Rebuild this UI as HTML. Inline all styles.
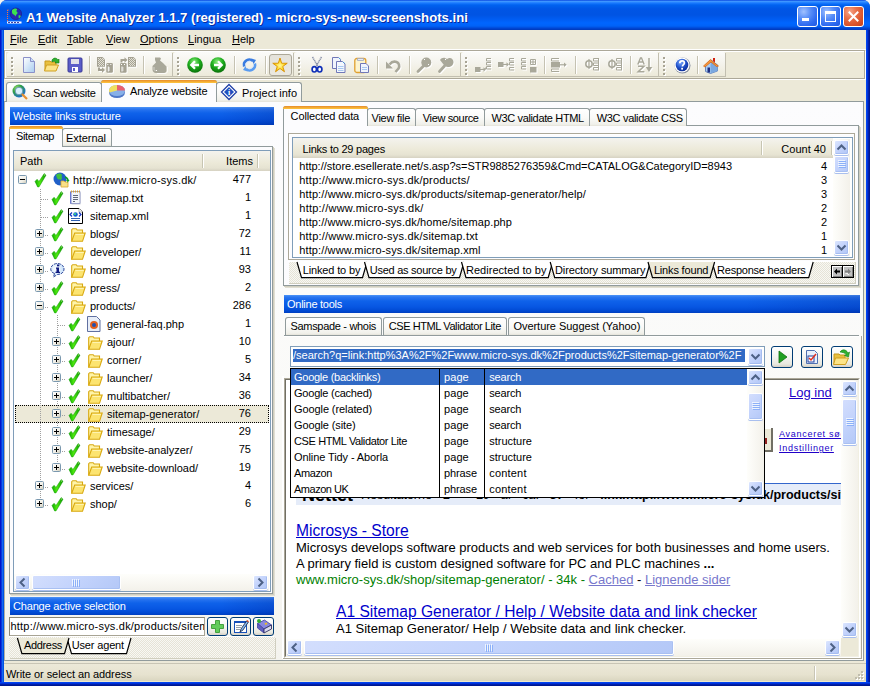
<!DOCTYPE html><html><head><meta charset="utf-8"><style>
*{box-sizing:border-box;margin:0;padding:0}
html,body{width:870px;height:686px;overflow:hidden}
body{position:relative;background:#F4F4F2;font-family:"Liberation Sans",sans-serif;font-size:11px;color:#000}
.a{position:absolute}
.t{position:absolute;white-space:nowrap;line-height:13px}
svg{position:absolute;overflow:visible}
.hdr{position:absolute;height:18px;color:#fff;font-size:11px;line-height:18px;padding-left:3px;white-space:nowrap;
 background:linear-gradient(90deg,rgba(0,0,0,0) 80%,rgba(0,20,120,.18) 100%),linear-gradient(#4E95F6 0,#2A75F0 2px,#0F62EA 6px,#0756E2 12px,#0049D2 16px,#003FC0 18px)}
.sbtn{position:absolute;width:15px;height:15px;border-radius:2px;border:1px solid #fff;
 background:linear-gradient(135deg,#DCE6FE 0,#C6D5FC 40%,#B1C6F6 100%);box-shadow:inset -1px -1px 0 #A6BDF0,0 1px 0 #A9BFEE}
.thumb{position:absolute;border-radius:2px;border:1px solid #fff;
 background:linear-gradient(135deg,#D3DEFD 0,#C3D3FC 50%,#B4C8F7 100%);box-shadow:inset -1px -1px 0 #A9C0F2,0 1px 0 #A9BFEE}
.track{position:absolute;background:#F4F3EE}
.tab{position:absolute;border:1px solid #919B9C;border-bottom:none;border-radius:3px 3px 0 0;
 background:linear-gradient(#FFFFFF 0,#FAFAF8 50%,#F0F0EA 90%,#E4E2D8 100%);white-space:nowrap;line-height:13px}
.tabsel{position:absolute;border:1px solid #919B9C;border-bottom:none;border-radius:3px 3px 0 0;background:#FCFCFE;white-space:nowrap;line-height:13px}
.tabsel:before{content:"";position:absolute;left:-1px;right:-1px;top:-1px;height:3px;border-radius:3px 3px 0 0;background:linear-gradient(#E68B2C,#FFC73C)}
.lv{position:absolute;border:1px solid #7F9DB9;background:#fff}
.hd{position:absolute;background:linear-gradient(#F4F3EE 0,#ECE9D8 60%,#E6E3D2 85%,#D6D2C2 100%)}
.tb{position:absolute;background:linear-gradient(#FBFBF9 0,#F5F4EE 40%,#ECE9D8 100%);border-radius:3px}
.ul{text-decoration:underline}
.btn{position:absolute;border:1px solid #003C74;border-radius:3px;background:linear-gradient(#FFFFFF 0,#F4F4F0 50%,#E8E8DF 85%,#D6D0C5 100%)}
.hatch{position:absolute;background-color:#F4F3EE;background-image:repeating-conic-gradient(#E6E3D6 0 25%,#F8F8F4 0 50%);background-size:2px 2px}
</style></head><body>
<div class="a" style="left:0;top:0;width:870px;height:686px;background:#0A3FCF;border-radius:7px 7px 0 0"></div>
<div class="a" style="left:0;top:0;width:870px;height:30px;border-radius:7px 7px 0 0;background:linear-gradient(#0A48E0 0,#3D95FF 1.5px,#1A7AFF 3px,#0062F0 5px,#0055E5 9px,#0054E3 15px,#005EF5 20px,#0066FF 23px,#0062F8 26px,#0044D0 28.5px,#0038B8 30px)"></div>
<div class="a" style="left:0;top:30px;width:4px;height:656px;background:linear-gradient(90deg,#0014C8 0 1px,#0A38DC 1px 2px,#1468F0 2px 3px,#0052E2 3px 4px)"></div>
<div class="a" style="left:866px;top:30px;width:4px;height:656px;background:linear-gradient(90deg,#0044F0 0 1px,#0034D8 1px 2px,#0020B0 2px 3px,#001890 3px 4px)"></div>
<div class="a" style="left:0;top:682px;width:870px;height:4px;background:linear-gradient(#0044F0 0 1px,#0030D8 1px 2px,#0020A8 2px 3px,#001890 3px 4px)"></div>
<svg style="left:0;top:0" width="30" height="30" viewBox="0 0 30 30"><path d="M7.5 10v11M7.5 10h2" stroke="#FF7040" stroke-width="1" stroke-dasharray="1 1"/><circle cx="15.8" cy="13.8" r="5.8" fill="#2828B0"/><circle cx="15.8" cy="13.8" r="5.8" fill="none" stroke="#1A1A80" stroke-width=".6"/><path d="M12 10c1.5-1.5 4-2 5-1 .5 1-1 1.5-.5 2.5 1 .5 1.5 1.5.5 2.5-1 .5-1 1.5-1.5 2.5-.5-1-1-2-2-2-1-.5-1.5-1.5-1.5-2.5z M18.5 15.5c1-.5 2 0 2.3.5-.3 1-1 2-2 2.5z" fill="#3CE050"/><rect x="7" y="21.5" width="14.5" height="2" fill="#fff"/><path d="M8 22.5h12" stroke="#4040A0" stroke-dasharray="2 1"/></svg>
<div class="t" style="left:26px;top:8.5px;font-size:13.15px;font-weight:bold;color:#fff;line-height:17px;text-shadow:1px 1px 0 #0A2A9E">A1 Website Analyzer 1.1.7 (registered) - micro-sys-new-screenshots.ini</div>
<div class="a" style="left:797px;top:6px;width:21px;height:21px;border:1px solid #fff;border-radius:3px;background:radial-gradient(circle at 30% 25%,#9FC0FF 0,#5A8FF8 35%,#2E6AF0 70%,#2058E0 100%)"></div>
<div class="a" style="left:820px;top:6px;width:21px;height:21px;border:1px solid #fff;border-radius:3px;background:radial-gradient(circle at 30% 25%,#9FC0FF 0,#5A8FF8 35%,#2E6AF0 70%,#2058E0 100%)"></div>
<div class="a" style="left:843px;top:6px;width:21px;height:21px;border:1px solid #fff;border-radius:3px;background:radial-gradient(circle at 30% 25%,#F6A68A 0,#E8704A 35%,#D9532A 70%,#C0401C 100%)"></div>
<div class="a" style="left:802px;top:18px;width:7px;height:3px;background:#fff"></div>
<div class="a" style="left:825px;top:11px;width:11px;height:11px;border:1px solid #fff;border-top:3px solid #fff"></div>
<svg style="left:848px;top:11px" width="11" height="11" viewBox="0 0 11 11"><path d="M1.5 1.5l8 8M9.5 1.5l-8 8" stroke="#fff" stroke-width="2" stroke-linecap="square"/></svg>
<div class="a" style="left:4px;top:30px;width:862px;height:652px;background:#ECE9D8"></div>
<div class="t" style="left:10px;top:32px;line-height:15px"><span class="ul">F</span>ile</div>
<div class="t" style="left:38px;top:32px;line-height:15px"><span class="ul">E</span>dit</div>
<div class="t" style="left:67px;top:32px;line-height:15px"><span class="ul">T</span>able</div>
<div class="t" style="left:106px;top:32px;line-height:15px"><span class="ul">V</span>iew</div>
<div class="t" style="left:140px;top:32px;line-height:15px"><span class="ul">O</span>ptions</div>
<div class="t" style="left:188px;top:32px;line-height:15px"><span class="ul">L</span>ingua</div>
<div class="t" style="left:232px;top:32px;line-height:15px"><span class="ul">H</span>elp</div>
<div class="a" style="left:4px;top:49px;width:862px;height:1px;background:#fff"></div>
<div class="a" style="left:4px;top:50px;width:861px;height:29px;border:1px solid #ACA899;box-shadow:inset 1px 1px 0 #fff,1px 1px 0 #fff"></div>
<div class="tb" style="left:7px;top:52px;width:166px;height:25px"></div>
<div class="a" style="left:172px;top:53px;width:1px;height:24px;background:#C2BFB0"></div>
<div class="a" style="left:7px;top:76px;width:166px;height:1px;background:#C2BFB0"></div>
<div class="a" style="left:11px;top:57px;width:2px;height:2px;background:#A8A494;box-shadow:1px 1px 0 #fff"></div>
<div class="a" style="left:11px;top:61px;width:2px;height:2px;background:#A8A494;box-shadow:1px 1px 0 #fff"></div>
<div class="a" style="left:11px;top:65px;width:2px;height:2px;background:#A8A494;box-shadow:1px 1px 0 #fff"></div>
<div class="a" style="left:11px;top:69px;width:2px;height:2px;background:#A8A494;box-shadow:1px 1px 0 #fff"></div>
<div class="a" style="left:11px;top:73px;width:2px;height:2px;background:#A8A494;box-shadow:1px 1px 0 #fff"></div>
<div class="tb" style="left:173px;top:52px;width:121px;height:25px"></div>
<div class="a" style="left:293px;top:53px;width:1px;height:24px;background:#C2BFB0"></div>
<div class="a" style="left:173px;top:76px;width:121px;height:1px;background:#C2BFB0"></div>
<div class="a" style="left:177px;top:57px;width:2px;height:2px;background:#A8A494;box-shadow:1px 1px 0 #fff"></div>
<div class="a" style="left:177px;top:61px;width:2px;height:2px;background:#A8A494;box-shadow:1px 1px 0 #fff"></div>
<div class="a" style="left:177px;top:65px;width:2px;height:2px;background:#A8A494;box-shadow:1px 1px 0 #fff"></div>
<div class="a" style="left:177px;top:69px;width:2px;height:2px;background:#A8A494;box-shadow:1px 1px 0 #fff"></div>
<div class="a" style="left:177px;top:73px;width:2px;height:2px;background:#A8A494;box-shadow:1px 1px 0 #fff"></div>
<div class="tb" style="left:294px;top:52px;width:167px;height:25px"></div>
<div class="a" style="left:460px;top:53px;width:1px;height:24px;background:#C2BFB0"></div>
<div class="a" style="left:294px;top:76px;width:167px;height:1px;background:#C2BFB0"></div>
<div class="a" style="left:298px;top:57px;width:2px;height:2px;background:#A8A494;box-shadow:1px 1px 0 #fff"></div>
<div class="a" style="left:298px;top:61px;width:2px;height:2px;background:#A8A494;box-shadow:1px 1px 0 #fff"></div>
<div class="a" style="left:298px;top:65px;width:2px;height:2px;background:#A8A494;box-shadow:1px 1px 0 #fff"></div>
<div class="a" style="left:298px;top:69px;width:2px;height:2px;background:#A8A494;box-shadow:1px 1px 0 #fff"></div>
<div class="a" style="left:298px;top:73px;width:2px;height:2px;background:#A8A494;box-shadow:1px 1px 0 #fff"></div>
<div class="tb" style="left:461px;top:52px;width:198px;height:25px"></div>
<div class="a" style="left:658px;top:53px;width:1px;height:24px;background:#C2BFB0"></div>
<div class="a" style="left:461px;top:76px;width:198px;height:1px;background:#C2BFB0"></div>
<div class="a" style="left:465px;top:57px;width:2px;height:2px;background:#A8A494;box-shadow:1px 1px 0 #fff"></div>
<div class="a" style="left:465px;top:61px;width:2px;height:2px;background:#A8A494;box-shadow:1px 1px 0 #fff"></div>
<div class="a" style="left:465px;top:65px;width:2px;height:2px;background:#A8A494;box-shadow:1px 1px 0 #fff"></div>
<div class="a" style="left:465px;top:69px;width:2px;height:2px;background:#A8A494;box-shadow:1px 1px 0 #fff"></div>
<div class="a" style="left:465px;top:73px;width:2px;height:2px;background:#A8A494;box-shadow:1px 1px 0 #fff"></div>
<div class="tb" style="left:659px;top:52px;width:67px;height:25px"></div>
<div class="a" style="left:725px;top:53px;width:1px;height:24px;background:#C2BFB0"></div>
<div class="a" style="left:659px;top:76px;width:67px;height:1px;background:#C2BFB0"></div>
<div class="a" style="left:663px;top:57px;width:2px;height:2px;background:#A8A494;box-shadow:1px 1px 0 #fff"></div>
<div class="a" style="left:663px;top:61px;width:2px;height:2px;background:#A8A494;box-shadow:1px 1px 0 #fff"></div>
<div class="a" style="left:663px;top:65px;width:2px;height:2px;background:#A8A494;box-shadow:1px 1px 0 #fff"></div>
<div class="a" style="left:663px;top:69px;width:2px;height:2px;background:#A8A494;box-shadow:1px 1px 0 #fff"></div>
<div class="a" style="left:663px;top:73px;width:2px;height:2px;background:#A8A494;box-shadow:1px 1px 0 #fff"></div>
<div class="a" style="left:89px;top:56px;width:1px;height:18px;background:#C5C2B2;box-shadow:1px 0 0 #fff"></div>
<div class="a" style="left:143px;top:56px;width:1px;height:18px;background:#C5C2B2;box-shadow:1px 0 0 #fff"></div>
<div class="a" style="left:234px;top:56px;width:1px;height:18px;background:#C5C2B2;box-shadow:1px 0 0 #fff"></div>
<div class="a" style="left:265px;top:56px;width:1px;height:18px;background:#C5C2B2;box-shadow:1px 0 0 #fff"></div>
<div class="a" style="left:377px;top:56px;width:1px;height:18px;background:#C5C2B2;box-shadow:1px 0 0 #fff"></div>
<div class="a" style="left:409px;top:56px;width:1px;height:18px;background:#C5C2B2;box-shadow:1px 0 0 #fff"></div>
<div class="a" style="left:544px;top:56px;width:1px;height:18px;background:#C5C2B2;box-shadow:1px 0 0 #fff"></div>
<div class="a" style="left:575px;top:56px;width:1px;height:18px;background:#C5C2B2;box-shadow:1px 0 0 #fff"></div>
<div class="a" style="left:630px;top:56px;width:1px;height:18px;background:#C5C2B2;box-shadow:1px 0 0 #fff"></div>
<div class="a" style="left:697px;top:56px;width:1px;height:18px;background:#C5C2B2;box-shadow:1px 0 0 #fff"></div>
<svg style="left:21px;top:57px" width="16" height="16" viewBox="0 0 16 16"><defs><linearGradient id="gn" x1="0" y1="0" x2="1" y2="1"><stop offset="0" stop-color="#fff"/><stop offset="1" stop-color="#A8CCF0"/></linearGradient></defs><path d="M2.5 .5h7l4 4v11h-11z" fill="url(#gn)" stroke="#8A90C8"/><path d="M9.5 .5v4h4" fill="#C8DEF8" stroke="#8A90C8"/></svg>
<svg style="left:44px;top:57px" width="16" height="16" viewBox="0 0 16 16"><path d="M1 4h5l1 1h5v8H1z" fill="#E8C040" stroke="#C89818"/><path d="M2.5 8h12l-2.5 6H.5z" fill="#FCE488" stroke="#D0A020"/><path d="M8 3c2-3 5-2 6 0l1-1v4h-4l1-1c-1-1-3-1-4 0z" fill="#30B030" stroke="#108010" stroke-width=".6"/></svg>
<svg style="left:67px;top:57px" width="16" height="16" viewBox="0 0 16 16"><rect x="1" y="1" width="14" height="14" rx="1" fill="#5A5CC8" stroke="#3A3A98"/><rect x="4" y="2" width="8" height="5" fill="#E0E0E8"/><rect x="5" y="10" width="6" height="5" fill="#fff"/><rect x="6" y="11" width="2" height="3" fill="#5A5CC8"/></svg>
<svg style="left:97px;top:57px" width="17" height="17" viewBox="0 0 17 17"><g transform="translate(1 1)" opacity=".9" style="filter:brightness(10)"><path d="M0 0h5.5l2.5 2.5V9.8H0z" fill="#A5A293"/><rect x="1" y="1" width="1" height="1" fill="#E2E0D4"/><rect x="3" y="1" width="1" height="1" fill="#E2E0D4"/><rect x="5" y="1" width="1" height="1" fill="#E2E0D4"/><rect x="2" y="2" width="1" height="1" fill="#E2E0D4"/><rect x="4" y="2" width="1" height="1" fill="#E2E0D4"/><rect x="6" y="2" width="1" height="1" fill="#E2E0D4"/><rect x="1" y="3" width="1" height="1" fill="#E2E0D4"/><rect x="3" y="3" width="1" height="1" fill="#E2E0D4"/><rect x="5" y="3" width="1" height="1" fill="#E2E0D4"/><rect x="2" y="4" width="1" height="1" fill="#E2E0D4"/><rect x="4" y="4" width="1" height="1" fill="#E2E0D4"/><rect x="6" y="4" width="1" height="1" fill="#E2E0D4"/><rect x="1" y="5" width="1" height="1" fill="#E2E0D4"/><rect x="3" y="5" width="1" height="1" fill="#E2E0D4"/><rect x="5" y="5" width="1" height="1" fill="#E2E0D4"/><rect x="2" y="6" width="1" height="1" fill="#E2E0D4"/><rect x="4" y="6" width="1" height="1" fill="#E2E0D4"/><rect x="6" y="6" width="1" height="1" fill="#E2E0D4"/><rect x="1" y="7" width="1" height="1" fill="#E2E0D4"/><rect x="3" y="7" width="1" height="1" fill="#E2E0D4"/><rect x="5" y="7" width="1" height="1" fill="#E2E0D4"/><rect x="2" y="8" width="1" height="1" fill="#E2E0D4"/><rect x="4" y="8" width="1" height="1" fill="#E2E0D4"/><rect x="6" y="8" width="1" height="1" fill="#E2E0D4"/><rect x="9.3" y="6" width="6.6" height="9.8" rx="1.3" fill="#A5A293"/><rect x="10.3" y="7" width="1" height="1" fill="#fff"/><rect x="13.3" y="7" width="1" height="1" fill="#fff"/><rect x="10.8" y="9.5" width="1" height="5" fill="#fff"/><rect x="11.8" y="10.5" width="1" height="1" fill="#fff"/><rect x="11.8" y="12.5" width="1" height="1" fill="#fff"/><path d="M2 10.5v2.5h3.5" stroke="#A5A293" stroke-width="2" fill="none"/><path d="M5 10.3l3 2.7-3 2.7z" fill="#A5A293"/></g><path d="M0 0h5.5l2.5 2.5V9.8H0z" fill="#A5A293"/><rect x="1" y="1" width="1" height="1" fill="#E2E0D4"/><rect x="3" y="1" width="1" height="1" fill="#E2E0D4"/><rect x="5" y="1" width="1" height="1" fill="#E2E0D4"/><rect x="2" y="2" width="1" height="1" fill="#E2E0D4"/><rect x="4" y="2" width="1" height="1" fill="#E2E0D4"/><rect x="6" y="2" width="1" height="1" fill="#E2E0D4"/><rect x="1" y="3" width="1" height="1" fill="#E2E0D4"/><rect x="3" y="3" width="1" height="1" fill="#E2E0D4"/><rect x="5" y="3" width="1" height="1" fill="#E2E0D4"/><rect x="2" y="4" width="1" height="1" fill="#E2E0D4"/><rect x="4" y="4" width="1" height="1" fill="#E2E0D4"/><rect x="6" y="4" width="1" height="1" fill="#E2E0D4"/><rect x="1" y="5" width="1" height="1" fill="#E2E0D4"/><rect x="3" y="5" width="1" height="1" fill="#E2E0D4"/><rect x="5" y="5" width="1" height="1" fill="#E2E0D4"/><rect x="2" y="6" width="1" height="1" fill="#E2E0D4"/><rect x="4" y="6" width="1" height="1" fill="#E2E0D4"/><rect x="6" y="6" width="1" height="1" fill="#E2E0D4"/><rect x="1" y="7" width="1" height="1" fill="#E2E0D4"/><rect x="3" y="7" width="1" height="1" fill="#E2E0D4"/><rect x="5" y="7" width="1" height="1" fill="#E2E0D4"/><rect x="2" y="8" width="1" height="1" fill="#E2E0D4"/><rect x="4" y="8" width="1" height="1" fill="#E2E0D4"/><rect x="6" y="8" width="1" height="1" fill="#E2E0D4"/><rect x="9.3" y="6" width="6.6" height="9.8" rx="1.3" fill="#A5A293"/><rect x="10.3" y="7" width="1" height="1" fill="#fff"/><rect x="13.3" y="7" width="1" height="1" fill="#fff"/><rect x="10.8" y="9.5" width="1" height="5" fill="#fff"/><rect x="11.8" y="10.5" width="1" height="1" fill="#fff"/><rect x="11.8" y="12.5" width="1" height="1" fill="#fff"/><path d="M2 10.5v2.5h3.5" stroke="#A5A293" stroke-width="2" fill="none"/><path d="M5 10.3l3 2.7-3 2.7z" fill="#A5A293"/></svg>
<svg style="left:120px;top:57px" width="17" height="17" viewBox="0 0 17 17"><g transform="translate(1 1)" opacity=".9" style="filter:brightness(10)"><path d="M8 0h5.5l2.5 2.5V9.8H8z" fill="#A5A293"/><rect x="9" y="1" width="1" height="1" fill="#E2E0D4"/><rect x="11" y="1" width="1" height="1" fill="#E2E0D4"/><rect x="13" y="1" width="1" height="1" fill="#E2E0D4"/><rect x="10" y="2" width="1" height="1" fill="#E2E0D4"/><rect x="12" y="2" width="1" height="1" fill="#E2E0D4"/><rect x="14" y="2" width="1" height="1" fill="#E2E0D4"/><rect x="9" y="3" width="1" height="1" fill="#E2E0D4"/><rect x="11" y="3" width="1" height="1" fill="#E2E0D4"/><rect x="13" y="3" width="1" height="1" fill="#E2E0D4"/><rect x="10" y="4" width="1" height="1" fill="#E2E0D4"/><rect x="12" y="4" width="1" height="1" fill="#E2E0D4"/><rect x="14" y="4" width="1" height="1" fill="#E2E0D4"/><rect x="9" y="5" width="1" height="1" fill="#E2E0D4"/><rect x="11" y="5" width="1" height="1" fill="#E2E0D4"/><rect x="13" y="5" width="1" height="1" fill="#E2E0D4"/><rect x="10" y="6" width="1" height="1" fill="#E2E0D4"/><rect x="12" y="6" width="1" height="1" fill="#E2E0D4"/><rect x="14" y="6" width="1" height="1" fill="#E2E0D4"/><rect x="9" y="7" width="1" height="1" fill="#E2E0D4"/><rect x="11" y="7" width="1" height="1" fill="#E2E0D4"/><rect x="13" y="7" width="1" height="1" fill="#E2E0D4"/><rect x="10" y="8" width="1" height="1" fill="#E2E0D4"/><rect x="12" y="8" width="1" height="1" fill="#E2E0D4"/><rect x="14" y="8" width="1" height="1" fill="#E2E0D4"/><rect x="0" y="6" width="6.6" height="9.8" rx="1.3" fill="#A5A293"/><rect x="1" y="7" width="1" height="1" fill="#fff"/><rect x="4" y="7" width="1" height="1" fill="#fff"/><rect x="1.5" y="9.5" width="1" height="5" fill="#fff"/><rect x="2.5" y="10.5" width="1" height="1" fill="#fff"/><rect x="2.5" y="12.5" width="1" height="1" fill="#fff"/><path d="M1.5 5.5V3h3.5" stroke="#A5A293" stroke-width="2" fill="none"/><path d="M4.5 .3l3 2.7-3 2.7z" fill="#A5A293"/></g><path d="M8 0h5.5l2.5 2.5V9.8H8z" fill="#A5A293"/><rect x="9" y="1" width="1" height="1" fill="#E2E0D4"/><rect x="11" y="1" width="1" height="1" fill="#E2E0D4"/><rect x="13" y="1" width="1" height="1" fill="#E2E0D4"/><rect x="10" y="2" width="1" height="1" fill="#E2E0D4"/><rect x="12" y="2" width="1" height="1" fill="#E2E0D4"/><rect x="14" y="2" width="1" height="1" fill="#E2E0D4"/><rect x="9" y="3" width="1" height="1" fill="#E2E0D4"/><rect x="11" y="3" width="1" height="1" fill="#E2E0D4"/><rect x="13" y="3" width="1" height="1" fill="#E2E0D4"/><rect x="10" y="4" width="1" height="1" fill="#E2E0D4"/><rect x="12" y="4" width="1" height="1" fill="#E2E0D4"/><rect x="14" y="4" width="1" height="1" fill="#E2E0D4"/><rect x="9" y="5" width="1" height="1" fill="#E2E0D4"/><rect x="11" y="5" width="1" height="1" fill="#E2E0D4"/><rect x="13" y="5" width="1" height="1" fill="#E2E0D4"/><rect x="10" y="6" width="1" height="1" fill="#E2E0D4"/><rect x="12" y="6" width="1" height="1" fill="#E2E0D4"/><rect x="14" y="6" width="1" height="1" fill="#E2E0D4"/><rect x="9" y="7" width="1" height="1" fill="#E2E0D4"/><rect x="11" y="7" width="1" height="1" fill="#E2E0D4"/><rect x="13" y="7" width="1" height="1" fill="#E2E0D4"/><rect x="10" y="8" width="1" height="1" fill="#E2E0D4"/><rect x="12" y="8" width="1" height="1" fill="#E2E0D4"/><rect x="14" y="8" width="1" height="1" fill="#E2E0D4"/><rect x="0" y="6" width="6.6" height="9.8" rx="1.3" fill="#A5A293"/><rect x="1" y="7" width="1" height="1" fill="#fff"/><rect x="4" y="7" width="1" height="1" fill="#fff"/><rect x="1.5" y="9.5" width="1" height="5" fill="#fff"/><rect x="2.5" y="10.5" width="1" height="1" fill="#fff"/><rect x="2.5" y="12.5" width="1" height="1" fill="#fff"/><path d="M1.5 5.5V3h3.5" stroke="#A5A293" stroke-width="2" fill="none"/><path d="M4.5 .3l3 2.7-3 2.7z" fill="#A5A293"/></svg>
<svg style="left:151px;top:57px" width="17" height="17" viewBox="0 0 17 17"><path d="M4 .5h5l1 1-1 2 3 2.5 3.5 3.5v4c0 1.5-1 2.5-2.5 2.5H5c-2 0-3.5-1.5-3.5-3.5V9L5 5.5 4 3z" fill="#A9A89A"/><path d="M3 12.5l1 1M5 13.5h1M2.5 11h1" stroke="#fff" stroke-width="1"/><path d="M15.5 9v4c0 1.5-1 2.5-2.5 2.5H5" stroke="#fff" stroke-width=".8" fill="none" transform="translate(1 1)"/></svg>
<svg style="left:187px;top:57px" width="16" height="16" viewBox="0 0 16 16"><defs><radialGradient id="ga" cx=".45" cy=".3" r=".75"><stop offset="0" stop-color="#90EE80"/><stop offset=".45" stop-color="#20B020"/><stop offset="1" stop-color="#066806"/></radialGradient></defs><circle cx="8" cy="8" r="7.8" fill="url(#ga)"/><path d="M12 8H4.5M8 4.3L4.3 8 8 11.7" stroke="#fff" stroke-width="2.3" fill="none"/></svg>
<svg style="left:210px;top:57px" width="16" height="16" viewBox="0 0 16 16"><defs><radialGradient id="ga" cx=".45" cy=".3" r=".75"><stop offset="0" stop-color="#90EE80"/><stop offset=".45" stop-color="#20B020"/><stop offset="1" stop-color="#066806"/></radialGradient></defs><circle cx="8" cy="8" r="7.8" fill="url(#ga)"/><path d="M4 8h7.5M8 4.3L11.7 8 8 11.7" stroke="#fff" stroke-width="2.3" fill="none"/></svg>
<svg style="left:241px;top:57px" width="17" height="16" viewBox="0 0 17 16"><path d="M3.2 9.5A5.3 5.3 0 0 1 12 4.2" fill="none" stroke="#3A7CE0" stroke-width="2.6"/><path d="M10.5 1.5l4.5 1.5-2.5 4z" fill="#3A7CE0"/><path d="M13.8 6.5A5.3 5.3 0 0 1 5 11.8" fill="none" stroke="#5A9CF0" stroke-width="2.6"/><path d="M6.5 14.5L2 13l2.5-4z" fill="#5A9CF0"/><path d="M4.5 8.5A4 4 0 0 1 10 4.5M12.5 7.5A4 4 0 0 1 7 11.5" fill="none" stroke="#C8E0FF" stroke-width=".7"/></svg>
<div class="a" style="left:269px;top:54px;width:23px;height:22px;border:1px solid #ACA899;border-radius:3px;background:linear-gradient(#E4E2DA,#EAE8E0)"></div>
<svg style="left:272px;top:57px" width="16" height="16" viewBox="0 0 16 16"><defs><radialGradient id="gs" cx=".5" cy=".55" r=".5"><stop offset="0" stop-color="#FFF8A0"/><stop offset=".6" stop-color="#FFD820"/><stop offset="1" stop-color="#F0B000"/></radialGradient></defs><path d="M8.00 1.00L9.70 6.25L15.23 6.25L10.76 9.50L12.47 14.75L8.00 11.50L3.53 14.75L5.24 9.50L0.77 6.25L6.30 6.25z" fill="url(#gs)" stroke="#D89000" stroke-width=".9" stroke-linejoin="round"/></svg>
<svg style="left:311px;top:57px" width="16" height="16" viewBox="0 0 16 16"><path d="M1.5 0l5.5 9.5M10.5 0L5 9.5" stroke="#8890A8" stroke-width="1.5" stroke-dasharray="1.2 .6"/><ellipse cx="3.3" cy="12.3" rx="2.2" ry="2.7" fill="#fff" stroke="#1030B8" stroke-width="1.7"/><ellipse cx="8.7" cy="12.3" rx="2.2" ry="2.7" fill="#fff" stroke="#1030B8" stroke-width="1.7"/></svg>
<svg style="left:331px;top:57px" width="16" height="16" viewBox="0 0 16 16"><path d="M1.5 .5h6l2 2v9h-8z" fill="#F0F4FC" stroke="#7078B8"/><path d="M8 .8l1.4 1.4" stroke="#40A0E0"/><path d="M5.5 4.5h6l2.5 2.5v8.5h-8.5z" fill="#F4F8FE" stroke="#7078B8"/><path d="M7 9.5h5.5M7 11.5h5.5M7 13.5h5.5" stroke="#A8C8F0"/><path d="M12 4.8l1.6 1.6" stroke="#40A0E0"/></svg>
<svg style="left:354px;top:57px" width="16" height="16" viewBox="0 0 16 16"><rect x=".8" y="1.5" width="11" height="14" rx="2" fill="#FCF4D0" stroke="#E0A030" stroke-width="1.3"/><path d="M3.5 1.5h6v2h-6z" fill="#E8ECF4" stroke="#A0A8C0" stroke-width=".8"/><path d="M6.5 6.5h5.5l2.5 2.5v6.5h-8z" fill="#F0F4FE" stroke="#7078B8"/><path d="M8 10.5h5M8 12.5h5" stroke="#A8C8F0"/></svg>
<svg style="left:386px;top:57px" width="17" height="17" viewBox="0 0 17 17"><g transform="translate(1 1)" style="filter:brightness(10)"><path d="M0 4.5v7h7z" fill="#A9A89A"/><path d="M3.5 7.5C5.5 5 8 4 10.5 5s3.5 4 2 6.5L9.5 15" fill="none" stroke="#A9A89A" stroke-width="2.6"/></g><path d="M0 4.5v7h7z" fill="#A9A89A"/><path d="M3.5 7.5C5.5 5 8 4 10.5 5s3.5 4 2 6.5L9.5 15" fill="none" stroke="#A9A89A" stroke-width="2.6"/></svg>
<svg style="left:416px;top:57px" width="17" height="17" viewBox="0 0 17 17"><g transform="translate(1 1)" style="filter:brightness(10)"><circle cx="10.3" cy="5.5" r="5" fill="#A9A89A"/><path d="M7.5 9L2 14.5" stroke="#A9A89A" stroke-width="2.8" stroke-linecap="round"/><rect x="8" y="2" width="1" height="1" fill="#fff"/><rect x="12" y="7" width="1" height="1" fill="#fff"/></g><circle cx="10.3" cy="5.5" r="5" fill="#A9A89A"/><path d="M7.5 9L2 14.5" stroke="#A9A89A" stroke-width="2.8" stroke-linecap="round"/><rect x="8" y="2" width="1" height="1" fill="#fff"/><rect x="12" y="7" width="1" height="1" fill="#fff"/></svg>
<svg style="left:438px;top:57px" width="17" height="17" viewBox="0 0 17 17"><g transform="translate(1 1)" style="filter:brightness(10)"><path d="M2 3c1-1.5 3-2.5 5-2l2 1 2-1c2.5-.5 4.5 1.5 4.5 4 0 3-2.5 5-5.5 5-2 0-3.5-1-4.5-2.5z" fill="#A9A89A"/><path d="M6.5 9L1.5 14.5" stroke="#A9A89A" stroke-width="2.8" stroke-linecap="round"/><rect x="7" y="2" width="1" height="1" fill="#fff"/></g><path d="M2 3c1-1.5 3-2.5 5-2l2 1 2-1c2.5-.5 4.5 1.5 4.5 4 0 3-2.5 5-5.5 5-2 0-3.5-1-4.5-2.5z" fill="#A9A89A"/><path d="M6.5 9L1.5 14.5" stroke="#A9A89A" stroke-width="2.8" stroke-linecap="round"/><rect x="7" y="2" width="1" height="1" fill="#fff"/></svg>
<svg style="left:475px;top:57px" width="17" height="17" viewBox="0 0 17 17"><g transform="translate(1 1)" style="filter:brightness(10)"><rect x="0" y="10" width="5.5" height="5" fill="#A9A89A"/><path d="M5 12.5h4" stroke="#A9A89A" stroke-width="1.2"/><path d="M8.5 10.3l2.5 2.2-2.5 2.2z" fill="#A9A89A"/><path d="M10 12l1.5-2" stroke="#A9A89A"/><path d="M16 1.5H11.5V4.0H16" stroke="#A9A89A" fill="none"/><path d="M16 5.5H11.5V8.0H16" stroke="#A9A89A" fill="none"/><path d="M16 9.5H11.5V12.0H16" stroke="#A9A89A" fill="none"/></g><rect x="0" y="10" width="5.5" height="5" fill="#A9A89A"/><path d="M5 12.5h4" stroke="#A9A89A" stroke-width="1.2"/><path d="M8.5 10.3l2.5 2.2-2.5 2.2z" fill="#A9A89A"/><path d="M10 12l1.5-2" stroke="#A9A89A"/><path d="M16 1.5H11.5V4.0H16" stroke="#A9A89A" fill="none"/><path d="M16 5.5H11.5V8.0H16" stroke="#A9A89A" fill="none"/><path d="M16 9.5H11.5V12.0H16" stroke="#A9A89A" fill="none"/></svg>
<svg style="left:498px;top:57px" width="17" height="17" viewBox="0 0 17 17"><g transform="translate(1 1)" style="filter:brightness(10)"><rect x="0" y="5" width="5.5" height="5" fill="#A9A89A"/><path d="M5 7.5h4" stroke="#A9A89A" stroke-width="1.2"/><path d="M8.5 5.3l2.5 2.2-2.5 2.2z" fill="#A9A89A"/><path d="M16 1.5H11.5V4.0H16" stroke="#A9A89A" fill="none"/><path d="M16 5.5H11.5V8.0H16" stroke="#A9A89A" fill="none"/><path d="M16 10.5H11.5V13.0H16" stroke="#A9A89A" fill="none"/></g><rect x="0" y="5" width="5.5" height="5" fill="#A9A89A"/><path d="M5 7.5h4" stroke="#A9A89A" stroke-width="1.2"/><path d="M8.5 5.3l2.5 2.2-2.5 2.2z" fill="#A9A89A"/><path d="M16 1.5H11.5V4.0H16" stroke="#A9A89A" fill="none"/><path d="M16 5.5H11.5V8.0H16" stroke="#A9A89A" fill="none"/><path d="M16 10.5H11.5V13.0H16" stroke="#A9A89A" fill="none"/></svg>
<svg style="left:521px;top:57px" width="17" height="17" viewBox="0 0 17 17"><g transform="translate(1 1)" style="filter:brightness(10)"><path d="M5 1.5H0.5V4.0H5" stroke="#A9A89A" fill="none"/><path d="M5 5.5H0.5V8.0H5" stroke="#A9A89A" fill="none"/><path d="M5 9.5H0.5V12.0H5" stroke="#A9A89A" fill="none"/><path d="M9.5 2.5h5v5h-5zM12 2.5v5M9.5 5h5" stroke="#A9A89A" fill="none"/><rect x="9" y="10" width="6.5" height="5.5" fill="#A9A89A"/></g><path d="M5 1.5H0.5V4.0H5" stroke="#A9A89A" fill="none"/><path d="M5 5.5H0.5V8.0H5" stroke="#A9A89A" fill="none"/><path d="M5 9.5H0.5V12.0H5" stroke="#A9A89A" fill="none"/><path d="M9.5 2.5h5v5h-5zM12 2.5v5M9.5 5h5" stroke="#A9A89A" fill="none"/><rect x="9" y="10" width="6.5" height="5.5" fill="#A9A89A"/></svg>
<svg style="left:551px;top:57px" width="17" height="17" viewBox="0 0 17 17"><g transform="translate(1 1)" style="filter:brightness(10)"><path d="M8 1.5H0.5V4.0H8" stroke="#A9A89A" fill="none"/><rect x="0" y="5" width="9" height="5.5" fill="#A9A89A"/><path d="M8 12.0H0.5V14.5H8" stroke="#A9A89A" fill="none"/><path d="M9 7.8h4.5" stroke="#A9A89A" stroke-width="1.2"/><path d="M13 5.5l2.7 2.3-2.7 2.3z" fill="#A9A89A"/></g><path d="M8 1.5H0.5V4.0H8" stroke="#A9A89A" fill="none"/><rect x="0" y="5" width="9" height="5.5" fill="#A9A89A"/><path d="M8 12.0H0.5V14.5H8" stroke="#A9A89A" fill="none"/><path d="M9 7.8h4.5" stroke="#A9A89A" stroke-width="1.2"/><path d="M13 5.5l2.7 2.3-2.7 2.3z" fill="#A9A89A"/></svg>
<svg style="left:584px;top:57px" width="17" height="17" viewBox="0 0 17 17"><g transform="translate(1 1)" style="filter:brightness(10)"><circle cx="5" cy="7" r="3.2" fill="none" stroke="#A9A89A" stroke-width="1.5"/><path d="M5 2v10" stroke="#A9A89A" stroke-width="1.2"/><path d="M14 1.5H9.5V4.0H14" stroke="#A9A89A" fill="none"/><path d="M14 6.0H9.5V8.5H14" stroke="#A9A89A" fill="none"/><path d="M14 10.5H9.5V13.0H14" stroke="#A9A89A" fill="none"/><path d="M14.5 1v12.5" stroke="#A9A89A"/></g><circle cx="5" cy="7" r="3.2" fill="none" stroke="#A9A89A" stroke-width="1.5"/><path d="M5 2v10" stroke="#A9A89A" stroke-width="1.2"/><path d="M14 1.5H9.5V4.0H14" stroke="#A9A89A" fill="none"/><path d="M14 6.0H9.5V8.5H14" stroke="#A9A89A" fill="none"/><path d="M14 10.5H9.5V13.0H14" stroke="#A9A89A" fill="none"/><path d="M14.5 1v12.5" stroke="#A9A89A"/></svg>
<svg style="left:607px;top:57px" width="17" height="17" viewBox="0 0 17 17"><g transform="translate(1 1)" style="filter:brightness(10)"><circle cx="5" cy="7" r="3.2" fill="none" stroke="#A9A89A" stroke-width="1.5"/><path d="M5 2v10" stroke="#A9A89A" stroke-width="1.2"/><path d="M14 1.5H9.5V4.0H14" stroke="#A9A89A" fill="none"/><path d="M14 6.0H9.5V8.5H14" stroke="#A9A89A" fill="none"/><path d="M14 10.5H9.5V13.0H14" stroke="#A9A89A" fill="none"/><path d="M14.5 1v12.5" stroke="#A9A89A"/></g><circle cx="5" cy="7" r="3.2" fill="none" stroke="#A9A89A" stroke-width="1.5"/><path d="M5 2v10" stroke="#A9A89A" stroke-width="1.2"/><path d="M14 1.5H9.5V4.0H14" stroke="#A9A89A" fill="none"/><path d="M14 6.0H9.5V8.5H14" stroke="#A9A89A" fill="none"/><path d="M14 10.5H9.5V13.0H14" stroke="#A9A89A" fill="none"/><path d="M14.5 1v12.5" stroke="#A9A89A"/></svg>
<svg style="left:637px;top:57px" width="17" height="17" viewBox="0 0 17 17"><g transform="translate(1 1)" style="filter:brightness(10)"><path d="M.8 7.5L3.5 1h1l2.7 6.5M2 5h4" stroke="#A9A89A" stroke-width="1.4" fill="none"/><path d="M1 9.3h6L1.2 14.8h6.2" stroke="#A9A89A" stroke-width="1.5" fill="none"/><path d="M12 1v11" stroke="#A9A89A" stroke-width="1.5"/><path d="M8.7 10l3.3 5 3.3-5z" fill="#A9A89A"/></g><path d="M.8 7.5L3.5 1h1l2.7 6.5M2 5h4" stroke="#A9A89A" stroke-width="1.4" fill="none"/><path d="M1 9.3h6L1.2 14.8h6.2" stroke="#A9A89A" stroke-width="1.5" fill="none"/><path d="M12 1v11" stroke="#A9A89A" stroke-width="1.5"/><path d="M8.7 10l3.3 5 3.3-5z" fill="#A9A89A"/></svg>
<svg style="left:674px;top:57px" width="17" height="17" viewBox="0 0 17 17"><defs><radialGradient id="gh" cx=".4" cy=".3" r=".75"><stop offset="0" stop-color="#7AA8FF"/><stop offset=".55" stop-color="#2050C8"/><stop offset="1" stop-color="#0A2890"/></radialGradient></defs><circle cx="8.5" cy="8.5" r="8" fill="#8890A0"/><circle cx="8" cy="8" r="7.6" fill="#fff"/><circle cx="8" cy="8" r="6.3" fill="url(#gh)"/><path d="M5.8 6.2c0-1.5 1-2.4 2.3-2.4s2.3.9 2.3 2.2c0 1.6-2 1.8-2 3.5" stroke="#fff" stroke-width="1.7" fill="none"/><rect x="7.2" y="10.8" width="1.8" height="1.8" fill="#fff"/></svg>
<svg style="left:703px;top:57px" width="17" height="17" viewBox="0 0 17 17"><path d="M2.5 8v6.5l5 2 7-2.5V8L8 3z" fill="#A8CCF4" stroke="#5070B0" stroke-width=".8"/><path d="M8 3l6.5 5v6l-7 2.5V9z" fill="#7AA8E0"/><path d="M.5 9L7.5 2.5l3.5 3 4.5 3.5-2 .5L8 5 2 10z" fill="#F89838" stroke="#D06010" stroke-width=".7"/><path d="M10 1v3l2 1.5V1z" fill="#D02010"/><rect x="4.5" y="10.5" width="2.5" height="5" fill="#203080"/></svg>
<div class="a" style="left:4px;top:101px;width:860px;height:560px;background:linear-gradient(#FCFCFE 0,#FAFAF7 60%,#F4F3EE 100%);border:1px solid #919B9C;border-left-color:#B0B0A4"></div>
<div class="tab" style="left:6px;top:82px;width:96px;height:20px"></div>
<div class="tab" style="left:216px;top:82px;width:86px;height:20px"></div>
<div class="tabsel" style="left:101px;top:80px;width:116px;height:22px"></div>
<svg style="left:12px;top:84px" width="17" height="17" viewBox="0 0 17 17"><defs><radialGradient id="gm" cx=".35" cy=".3" r=".7"><stop offset="0" stop-color="#A0E070"/><stop offset=".5" stop-color="#30A040"/><stop offset="1" stop-color="#2070D0"/></radialGradient></defs><circle cx="7" cy="7" r="6.5" fill="url(#gm)"/><circle cx="7" cy="7" r="3.8" fill="#D8F0FA" stroke="#5888B0" stroke-width=".8"/><path d="M10 10l5 5" stroke="#E89030" stroke-width="2.2"/></svg>
<div class="t" style="left:33px;top:87px;font-size:11px;letter-spacing:-0.236px;">Scan website</div>
<svg style="left:108px;top:83px" width="18" height="16" viewBox="0 0 18 16"><ellipse cx="9" cy="9.5" rx="8" ry="5.5" fill="#5078C8"/><ellipse cx="9" cy="7.5" rx="8" ry="5.5" fill="#88B0E8"/><path d="M9 7.5V2A8 5.5 0 0 1 17 7.5z" fill="#E86070"/><path d="M9 7.5L1.5 9.5A8 5.5 0 0 1 9 2z" fill="#F0E060"/></svg>
<div class="t" style="left:130px;top:85px;font-size:11px;letter-spacing:-0.133px;">Analyze website</div>
<svg style="left:221px;top:84px" width="16" height="16" viewBox="0 0 16 16"><path d="M8 .5L15.5 8 8 15.5.5 8z" fill="#fff" stroke="#2040A8" stroke-width="1.3"/><path d="M8 3L13 8 8 13 3 8z" fill="#2050C0"/><text x="8" y="11.3" text-anchor="middle" font-size="8" font-weight="bold" font-family="Liberation Serif" fill="#fff">i</text></svg>
<div class="t" style="left:242px;top:87px;font-size:11px;letter-spacing:-0.003px;">Project info</div>
<div class="hdr" style="left:10px;top:107px;width:264px;letter-spacing:-0.115px;">Website links structure</div>
<div class="a" style="left:9px;top:146px;width:264px;height:448px;border:1px solid #919B9C;background:#FCFCFE;box-shadow:1px 1px 0 #D0CEBF,2px 2px 0 #E0DED2"></div>
<div class="tab" style="left:62px;top:128px;width:50px;height:18px"></div>
<div class="tabsel" style="left:9px;top:126px;width:54px;height:21px"></div>
<div class="t" style="left:16px;top:130px;font-size:11px;letter-spacing:-0.337px;">Sitemap</div>
<div class="t" style="left:66px;top:132px;font-size:11px;letter-spacing:-0.045px;">External</div>
<div class="lv" style="left:13px;top:150px;width:258px;height:442px"></div>
<div class="hd" style="left:14px;top:151px;width:256px;height:20px"></div>
<div class="a" style="left:202px;top:154px;width:1px;height:14px;background:#C7C5B2;box-shadow:1px 0 0 #fff"></div>
<div class="a" style="left:257px;top:154px;width:1px;height:14px;background:#C7C5B2;box-shadow:1px 0 0 #fff"></div>
<div class="t" style="left:20px;top:155px;font-size:11px;">Path</div>
<div class="t" style="left:200px;top:155px;font-size:11px;width:53px;text-align:right">Items</div>
<div class="a" style="left:15px;top:405px;width:254px;height:18px;background:#ECE9D8;border:1px dotted #000"></div>
<div class="a" style="left:40px;top:189px;width:1px;height:315px;background:repeating-linear-gradient(#A0A0A0 0 1px,transparent 1px 2px)"></div>
<div class="a" style="left:41px;top:199px;width:7px;height:1px;background:repeating-linear-gradient(90deg,#A0A0A0 0 1px,transparent 1px 2px)"></div>
<div class="a" style="left:41px;top:217px;width:7px;height:1px;background:repeating-linear-gradient(90deg,#A0A0A0 0 1px,transparent 1px 2px)"></div>
<div class="a" style="left:57px;top:315px;width:1px;height:153px;background:repeating-linear-gradient(#A0A0A0 0 1px,transparent 1px 2px)"></div>
<div class="a" style="left:45px;top:235px;width:4px;height:1px;background:repeating-linear-gradient(90deg,#A0A0A0 0 1px,transparent 1px 2px)"></div>
<div class="a" style="left:45px;top:253px;width:4px;height:1px;background:repeating-linear-gradient(90deg,#A0A0A0 0 1px,transparent 1px 2px)"></div>
<div class="a" style="left:45px;top:271px;width:4px;height:1px;background:repeating-linear-gradient(90deg,#A0A0A0 0 1px,transparent 1px 2px)"></div>
<div class="a" style="left:45px;top:289px;width:4px;height:1px;background:repeating-linear-gradient(90deg,#A0A0A0 0 1px,transparent 1px 2px)"></div>
<div class="a" style="left:45px;top:307px;width:4px;height:1px;background:repeating-linear-gradient(90deg,#A0A0A0 0 1px,transparent 1px 2px)"></div>
<div class="a" style="left:58px;top:325px;width:8px;height:1px;background:repeating-linear-gradient(90deg,#A0A0A0 0 1px,transparent 1px 2px)"></div>
<div class="a" style="left:58px;top:343px;width:8px;height:1px;background:repeating-linear-gradient(90deg,#A0A0A0 0 1px,transparent 1px 2px)"></div>
<div class="a" style="left:58px;top:361px;width:8px;height:1px;background:repeating-linear-gradient(90deg,#A0A0A0 0 1px,transparent 1px 2px)"></div>
<div class="a" style="left:58px;top:379px;width:8px;height:1px;background:repeating-linear-gradient(90deg,#A0A0A0 0 1px,transparent 1px 2px)"></div>
<div class="a" style="left:58px;top:397px;width:8px;height:1px;background:repeating-linear-gradient(90deg,#A0A0A0 0 1px,transparent 1px 2px)"></div>
<div class="a" style="left:58px;top:415px;width:8px;height:1px;background:repeating-linear-gradient(90deg,#A0A0A0 0 1px,transparent 1px 2px)"></div>
<div class="a" style="left:58px;top:433px;width:8px;height:1px;background:repeating-linear-gradient(90deg,#A0A0A0 0 1px,transparent 1px 2px)"></div>
<div class="a" style="left:58px;top:451px;width:8px;height:1px;background:repeating-linear-gradient(90deg,#A0A0A0 0 1px,transparent 1px 2px)"></div>
<div class="a" style="left:58px;top:469px;width:8px;height:1px;background:repeating-linear-gradient(90deg,#A0A0A0 0 1px,transparent 1px 2px)"></div>
<div class="a" style="left:45px;top:487px;width:4px;height:1px;background:repeating-linear-gradient(90deg,#A0A0A0 0 1px,transparent 1px 2px)"></div>
<div class="a" style="left:45px;top:505px;width:4px;height:1px;background:repeating-linear-gradient(90deg,#A0A0A0 0 1px,transparent 1px 2px)"></div>
<svg style="left:18px;top:175px" width="9" height="9" viewBox="0 0 9 9"><defs><linearGradient id="gp" x1="0" y1="0" x2="1" y2="1"><stop offset="0" stop-color="#fff"/><stop offset=".6" stop-color="#F0EEE6"/><stop offset="1" stop-color="#C8C4B0"/></linearGradient></defs><rect x=".5" y=".5" width="8" height="8" rx="1" fill="url(#gp)" stroke="#7A98AF"/><path d="M2 4.5h5" stroke="#000"/></svg>
<svg style="left:35px;top:173px" width="12" height="14" viewBox="0 0 12 14"><defs><linearGradient id="gc" x1="0" y1="0" x2="1" y2="0"><stop offset="0" stop-color="#10A800"/><stop offset=".45" stop-color="#50EC10"/><stop offset="1" stop-color="#089000"/></linearGradient></defs><path d="M0 8.4L2.1 6.3l1.9 2.2L9.2 .6 11 2.3 4 13.9H2.6z" fill="url(#gc)" stroke="#0A9A00" stroke-width=".5"/><rect x="9" y="1.5" width="1" height="1" fill="#B0F080"/></svg>
<svg style="left:53px;top:172px" width="17" height="16" viewBox="0 0 17 16"><circle cx="7" cy="7" r="6.5" fill="#2060C8"/><path d="M3 3c2-2 5-2 6 0-1 2 1 3-1 5-2-1-3 0-4-2z" fill="#40C040"/><path d="M8 9h3l1 1h3v5H8z" fill="#F8E088" stroke="#D8A830" stroke-width=".8"/><path d="M12 5a4 4 0 0 1 3 4l1-1M15 9l-1.5-1" stroke="#10A020" stroke-width="1.4" fill="none"/></svg>
<div class="t" style="left:73px;top:174px;font-size:11px;letter-spacing:0.205px;">http://www.micro-sys.dk/</div>
<div class="t" style="left:200px;top:173px;font-size:11px;width:51px;text-align:right">477</div>
<svg style="left:52px;top:191px" width="12" height="14" viewBox="0 0 12 14"><defs><linearGradient id="gc" x1="0" y1="0" x2="1" y2="0"><stop offset="0" stop-color="#10A800"/><stop offset=".45" stop-color="#50EC10"/><stop offset="1" stop-color="#089000"/></linearGradient></defs><path d="M0 8.4L2.1 6.3l1.9 2.2L9.2 .6 11 2.3 4 13.9H2.6z" fill="url(#gc)" stroke="#0A9A00" stroke-width=".5"/><rect x="9" y="1.5" width="1" height="1" fill="#B0F080"/></svg>
<svg style="left:70px;top:190px" width="13" height="16" viewBox="0 0 13 16"><path d="M1.5 2.5h9v12h-9z" fill="#C8CCD8"/><path d="M.5 1.5h9.5v12H.5z" fill="#F2F6FA" stroke="#8890C0" stroke-width=".8"/><path d="M.8 2v11.5" stroke="#6070D0" stroke-width="1.2"/><path d="M1 1.5h9" stroke="#D8A030" stroke-width="2" stroke-dasharray="1 1"/><path d="M3 5.5h5M3 7.5h5M3 9.5h5M3 11.5h2" stroke="#606878"/></svg>
<div class="t" style="left:90px;top:192px;font-size:11px;">sitemap.txt</div>
<div class="t" style="left:200px;top:191px;font-size:11px;width:51px;text-align:right">1</div>
<svg style="left:52px;top:209px" width="12" height="14" viewBox="0 0 12 14"><defs><linearGradient id="gc" x1="0" y1="0" x2="1" y2="0"><stop offset="0" stop-color="#10A800"/><stop offset=".45" stop-color="#50EC10"/><stop offset="1" stop-color="#089000"/></linearGradient></defs><path d="M0 8.4L2.1 6.3l1.9 2.2L9.2 .6 11 2.3 4 13.9H2.6z" fill="url(#gc)" stroke="#0A9A00" stroke-width=".5"/><rect x="9" y="1.5" width="1" height="1" fill="#B0F080"/></svg>
<svg style="left:68px;top:208px" width="15" height="16" viewBox="0 0 15 16"><path d="M.5 .5h10.5l3.5 3.5v11.5H.5z" fill="#fff" stroke="#000"/><path d="M11 .5v3.5h3.5" fill="#fff" stroke="#808080" stroke-width=".6"/><circle cx="7.5" cy="6.5" r="2.3" fill="#1060D0"/><circle cx="7" cy="6" r="1" fill="#40E080"/><path d="M4 4.5l-2 2 2 2M11 4.5l2 2-2 2" stroke="#1030C0" stroke-width="1.2" fill="none"/><path d="M3 10.5h9M3 12.5h9" stroke="#3060B0"/></svg>
<div class="t" style="left:90px;top:210px;font-size:11px;">sitemap.xml</div>
<div class="t" style="left:200px;top:209px;font-size:11px;width:51px;text-align:right">1</div>
<svg style="left:35px;top:229px" width="9" height="9" viewBox="0 0 9 9"><defs><linearGradient id="gp" x1="0" y1="0" x2="1" y2="1"><stop offset="0" stop-color="#fff"/><stop offset=".6" stop-color="#F0EEE6"/><stop offset="1" stop-color="#C8C4B0"/></linearGradient></defs><rect x=".5" y=".5" width="8" height="8" rx="1" fill="url(#gp)" stroke="#7A98AF"/><path d="M2 4.5h5" stroke="#000"/><path d="M4.5 2v5" stroke="#000"/></svg>
<svg style="left:52px;top:227px" width="12" height="14" viewBox="0 0 12 14"><defs><linearGradient id="gc" x1="0" y1="0" x2="1" y2="0"><stop offset="0" stop-color="#10A800"/><stop offset=".45" stop-color="#50EC10"/><stop offset="1" stop-color="#089000"/></linearGradient></defs><path d="M0 8.4L2.1 6.3l1.9 2.2L9.2 .6 11 2.3 4 13.9H2.6z" fill="url(#gc)" stroke="#0A9A00" stroke-width=".5"/><rect x="9" y="1.5" width="1" height="1" fill="#B0F080"/></svg>
<svg style="left:71px;top:228px" width="15" height="14" viewBox="0 0 15 14"><path d="M.7 13.3V1.7l1-1h3.5l1 1.3h5.3v3" fill="#FFF4A8" stroke="#D8A810" stroke-width="1.1"/><path d="M.7 13.3L3.7 5h10.5l-2.7 8.3z" fill="#FCE470" stroke="#D8A810" stroke-width="1.1"/><path d="M4.5 6.5h8.3" stroke="#FFF8C0" stroke-width=".8"/></svg>
<div class="t" style="left:90px;top:228px;font-size:11px;">blogs/</div>
<div class="t" style="left:200px;top:227px;font-size:11px;width:51px;text-align:right">72</div>
<svg style="left:35px;top:247px" width="9" height="9" viewBox="0 0 9 9"><defs><linearGradient id="gp" x1="0" y1="0" x2="1" y2="1"><stop offset="0" stop-color="#fff"/><stop offset=".6" stop-color="#F0EEE6"/><stop offset="1" stop-color="#C8C4B0"/></linearGradient></defs><rect x=".5" y=".5" width="8" height="8" rx="1" fill="url(#gp)" stroke="#7A98AF"/><path d="M2 4.5h5" stroke="#000"/><path d="M4.5 2v5" stroke="#000"/></svg>
<svg style="left:52px;top:245px" width="12" height="14" viewBox="0 0 12 14"><defs><linearGradient id="gc" x1="0" y1="0" x2="1" y2="0"><stop offset="0" stop-color="#10A800"/><stop offset=".45" stop-color="#50EC10"/><stop offset="1" stop-color="#089000"/></linearGradient></defs><path d="M0 8.4L2.1 6.3l1.9 2.2L9.2 .6 11 2.3 4 13.9H2.6z" fill="url(#gc)" stroke="#0A9A00" stroke-width=".5"/><rect x="9" y="1.5" width="1" height="1" fill="#B0F080"/></svg>
<svg style="left:71px;top:246px" width="15" height="14" viewBox="0 0 15 14"><path d="M.7 13.3V1.7l1-1h3.5l1 1.3h5.3v3" fill="#FFF4A8" stroke="#D8A810" stroke-width="1.1"/><path d="M.7 13.3L3.7 5h10.5l-2.7 8.3z" fill="#FCE470" stroke="#D8A810" stroke-width="1.1"/><path d="M4.5 6.5h8.3" stroke="#FFF8C0" stroke-width=".8"/></svg>
<div class="t" style="left:90px;top:246px;font-size:11px;">developer/</div>
<div class="t" style="left:200px;top:245px;font-size:11px;width:51px;text-align:right">11</div>
<svg style="left:35px;top:265px" width="9" height="9" viewBox="0 0 9 9"><defs><linearGradient id="gp" x1="0" y1="0" x2="1" y2="1"><stop offset="0" stop-color="#fff"/><stop offset=".6" stop-color="#F0EEE6"/><stop offset="1" stop-color="#C8C4B0"/></linearGradient></defs><rect x=".5" y=".5" width="8" height="8" rx="1" fill="url(#gp)" stroke="#7A98AF"/><path d="M2 4.5h5" stroke="#000"/><path d="M4.5 2v5" stroke="#000"/></svg>
<svg style="left:50px;top:263px" width="15" height="15" viewBox="0 0 15 15"><defs><radialGradient id="gi" cx=".4" cy=".4" r=".7"><stop offset="0" stop-color="#FFFFFF"/><stop offset="1" stop-color="#B8D8F8"/></radialGradient></defs><path d="M4.5 10.5C1.5 9.5.5 7.5.8 5.5 1.5 2 4.5.5 7.5.5s6.5 2 6.5 5.5-3 5.5-6.5 5.5L3.5 14z" fill="url(#gi)" stroke="#203890" stroke-width=".9" stroke-dasharray="3 1"/><rect x="7" y="1.5" width="2.3" height="1.8" fill="#101A80"/><path d="M6 4.5h3v4.3h1v1.2H5.5V8.8h1V5.7H6z" fill="#101A80"/></svg>
<svg style="left:71px;top:264px" width="15" height="14" viewBox="0 0 15 14"><path d="M.7 13.3V1.7l1-1h3.5l1 1.3h5.3v3" fill="#FFF4A8" stroke="#D8A810" stroke-width="1.1"/><path d="M.7 13.3L3.7 5h10.5l-2.7 8.3z" fill="#FCE470" stroke="#D8A810" stroke-width="1.1"/><path d="M4.5 6.5h8.3" stroke="#FFF8C0" stroke-width=".8"/></svg>
<div class="t" style="left:90px;top:264px;font-size:11px;">home/</div>
<div class="t" style="left:200px;top:263px;font-size:11px;width:51px;text-align:right">93</div>
<svg style="left:35px;top:283px" width="9" height="9" viewBox="0 0 9 9"><defs><linearGradient id="gp" x1="0" y1="0" x2="1" y2="1"><stop offset="0" stop-color="#fff"/><stop offset=".6" stop-color="#F0EEE6"/><stop offset="1" stop-color="#C8C4B0"/></linearGradient></defs><rect x=".5" y=".5" width="8" height="8" rx="1" fill="url(#gp)" stroke="#7A98AF"/><path d="M2 4.5h5" stroke="#000"/><path d="M4.5 2v5" stroke="#000"/></svg>
<svg style="left:52px;top:281px" width="12" height="14" viewBox="0 0 12 14"><defs><linearGradient id="gc" x1="0" y1="0" x2="1" y2="0"><stop offset="0" stop-color="#10A800"/><stop offset=".45" stop-color="#50EC10"/><stop offset="1" stop-color="#089000"/></linearGradient></defs><path d="M0 8.4L2.1 6.3l1.9 2.2L9.2 .6 11 2.3 4 13.9H2.6z" fill="url(#gc)" stroke="#0A9A00" stroke-width=".5"/><rect x="9" y="1.5" width="1" height="1" fill="#B0F080"/></svg>
<svg style="left:71px;top:282px" width="15" height="14" viewBox="0 0 15 14"><path d="M.7 13.3V1.7l1-1h3.5l1 1.3h5.3v3" fill="#FFF4A8" stroke="#D8A810" stroke-width="1.1"/><path d="M.7 13.3L3.7 5h10.5l-2.7 8.3z" fill="#FCE470" stroke="#D8A810" stroke-width="1.1"/><path d="M4.5 6.5h8.3" stroke="#FFF8C0" stroke-width=".8"/></svg>
<div class="t" style="left:90px;top:282px;font-size:11px;">press/</div>
<div class="t" style="left:200px;top:281px;font-size:11px;width:51px;text-align:right">2</div>
<svg style="left:35px;top:301px" width="9" height="9" viewBox="0 0 9 9"><defs><linearGradient id="gp" x1="0" y1="0" x2="1" y2="1"><stop offset="0" stop-color="#fff"/><stop offset=".6" stop-color="#F0EEE6"/><stop offset="1" stop-color="#C8C4B0"/></linearGradient></defs><rect x=".5" y=".5" width="8" height="8" rx="1" fill="url(#gp)" stroke="#7A98AF"/><path d="M2 4.5h5" stroke="#000"/></svg>
<svg style="left:52px;top:299px" width="12" height="14" viewBox="0 0 12 14"><defs><linearGradient id="gc" x1="0" y1="0" x2="1" y2="0"><stop offset="0" stop-color="#10A800"/><stop offset=".45" stop-color="#50EC10"/><stop offset="1" stop-color="#089000"/></linearGradient></defs><path d="M0 8.4L2.1 6.3l1.9 2.2L9.2 .6 11 2.3 4 13.9H2.6z" fill="url(#gc)" stroke="#0A9A00" stroke-width=".5"/><rect x="9" y="1.5" width="1" height="1" fill="#B0F080"/></svg>
<svg style="left:71px;top:300px" width="15" height="14" viewBox="0 0 15 14"><path d="M.7 13.3V1.7l1-1h3.5l1 1.3h5.3v3" fill="#FFF4A8" stroke="#D8A810" stroke-width="1.1"/><path d="M.7 13.3L3.7 5h10.5l-2.7 8.3z" fill="#FCE470" stroke="#D8A810" stroke-width="1.1"/><path d="M4.5 6.5h8.3" stroke="#FFF8C0" stroke-width=".8"/></svg>
<div class="t" style="left:90px;top:300px;font-size:11px;">products/</div>
<div class="t" style="left:200px;top:299px;font-size:11px;width:51px;text-align:right">286</div>
<svg style="left:69px;top:317px" width="12" height="14" viewBox="0 0 12 14"><defs><linearGradient id="gc" x1="0" y1="0" x2="1" y2="0"><stop offset="0" stop-color="#10A800"/><stop offset=".45" stop-color="#50EC10"/><stop offset="1" stop-color="#089000"/></linearGradient></defs><path d="M0 8.4L2.1 6.3l1.9 2.2L9.2 .6 11 2.3 4 13.9H2.6z" fill="url(#gc)" stroke="#0A9A00" stroke-width=".5"/><rect x="9" y="1.5" width="1" height="1" fill="#B0F080"/></svg>
<svg style="left:87px;top:316px" width="14" height="16" viewBox="0 0 14 16"><path d="M.5 .5h9l3.5 3.5v11.5H.5z" fill="#E8EEF8" stroke="#6070A0"/><circle cx="7" cy="9" r="4" fill="#E06020"/><circle cx="7" cy="9" r="2" fill="#2050B0"/></svg>
<div class="t" style="left:107px;top:318px;font-size:11px;">general-faq.php</div>
<div class="t" style="left:200px;top:317px;font-size:11px;width:51px;text-align:right">1</div>
<svg style="left:52px;top:337px" width="9" height="9" viewBox="0 0 9 9"><defs><linearGradient id="gp" x1="0" y1="0" x2="1" y2="1"><stop offset="0" stop-color="#fff"/><stop offset=".6" stop-color="#F0EEE6"/><stop offset="1" stop-color="#C8C4B0"/></linearGradient></defs><rect x=".5" y=".5" width="8" height="8" rx="1" fill="url(#gp)" stroke="#7A98AF"/><path d="M2 4.5h5" stroke="#000"/><path d="M4.5 2v5" stroke="#000"/></svg>
<svg style="left:69px;top:335px" width="12" height="14" viewBox="0 0 12 14"><defs><linearGradient id="gc" x1="0" y1="0" x2="1" y2="0"><stop offset="0" stop-color="#10A800"/><stop offset=".45" stop-color="#50EC10"/><stop offset="1" stop-color="#089000"/></linearGradient></defs><path d="M0 8.4L2.1 6.3l1.9 2.2L9.2 .6 11 2.3 4 13.9H2.6z" fill="url(#gc)" stroke="#0A9A00" stroke-width=".5"/><rect x="9" y="1.5" width="1" height="1" fill="#B0F080"/></svg>
<svg style="left:88px;top:336px" width="15" height="14" viewBox="0 0 15 14"><path d="M.7 13.3V1.7l1-1h3.5l1 1.3h5.3v3" fill="#FFF4A8" stroke="#D8A810" stroke-width="1.1"/><path d="M.7 13.3L3.7 5h10.5l-2.7 8.3z" fill="#FCE470" stroke="#D8A810" stroke-width="1.1"/><path d="M4.5 6.5h8.3" stroke="#FFF8C0" stroke-width=".8"/></svg>
<div class="t" style="left:107px;top:336px;font-size:11px;">ajour/</div>
<div class="t" style="left:200px;top:335px;font-size:11px;width:51px;text-align:right">10</div>
<svg style="left:52px;top:355px" width="9" height="9" viewBox="0 0 9 9"><defs><linearGradient id="gp" x1="0" y1="0" x2="1" y2="1"><stop offset="0" stop-color="#fff"/><stop offset=".6" stop-color="#F0EEE6"/><stop offset="1" stop-color="#C8C4B0"/></linearGradient></defs><rect x=".5" y=".5" width="8" height="8" rx="1" fill="url(#gp)" stroke="#7A98AF"/><path d="M2 4.5h5" stroke="#000"/><path d="M4.5 2v5" stroke="#000"/></svg>
<svg style="left:69px;top:353px" width="12" height="14" viewBox="0 0 12 14"><defs><linearGradient id="gc" x1="0" y1="0" x2="1" y2="0"><stop offset="0" stop-color="#10A800"/><stop offset=".45" stop-color="#50EC10"/><stop offset="1" stop-color="#089000"/></linearGradient></defs><path d="M0 8.4L2.1 6.3l1.9 2.2L9.2 .6 11 2.3 4 13.9H2.6z" fill="url(#gc)" stroke="#0A9A00" stroke-width=".5"/><rect x="9" y="1.5" width="1" height="1" fill="#B0F080"/></svg>
<svg style="left:88px;top:354px" width="15" height="14" viewBox="0 0 15 14"><path d="M.7 13.3V1.7l1-1h3.5l1 1.3h5.3v3" fill="#FFF4A8" stroke="#D8A810" stroke-width="1.1"/><path d="M.7 13.3L3.7 5h10.5l-2.7 8.3z" fill="#FCE470" stroke="#D8A810" stroke-width="1.1"/><path d="M4.5 6.5h8.3" stroke="#FFF8C0" stroke-width=".8"/></svg>
<div class="t" style="left:107px;top:354px;font-size:11px;">corner/</div>
<div class="t" style="left:200px;top:353px;font-size:11px;width:51px;text-align:right">5</div>
<svg style="left:52px;top:373px" width="9" height="9" viewBox="0 0 9 9"><defs><linearGradient id="gp" x1="0" y1="0" x2="1" y2="1"><stop offset="0" stop-color="#fff"/><stop offset=".6" stop-color="#F0EEE6"/><stop offset="1" stop-color="#C8C4B0"/></linearGradient></defs><rect x=".5" y=".5" width="8" height="8" rx="1" fill="url(#gp)" stroke="#7A98AF"/><path d="M2 4.5h5" stroke="#000"/><path d="M4.5 2v5" stroke="#000"/></svg>
<svg style="left:69px;top:371px" width="12" height="14" viewBox="0 0 12 14"><defs><linearGradient id="gc" x1="0" y1="0" x2="1" y2="0"><stop offset="0" stop-color="#10A800"/><stop offset=".45" stop-color="#50EC10"/><stop offset="1" stop-color="#089000"/></linearGradient></defs><path d="M0 8.4L2.1 6.3l1.9 2.2L9.2 .6 11 2.3 4 13.9H2.6z" fill="url(#gc)" stroke="#0A9A00" stroke-width=".5"/><rect x="9" y="1.5" width="1" height="1" fill="#B0F080"/></svg>
<svg style="left:88px;top:372px" width="15" height="14" viewBox="0 0 15 14"><path d="M.7 13.3V1.7l1-1h3.5l1 1.3h5.3v3" fill="#FFF4A8" stroke="#D8A810" stroke-width="1.1"/><path d="M.7 13.3L3.7 5h10.5l-2.7 8.3z" fill="#FCE470" stroke="#D8A810" stroke-width="1.1"/><path d="M4.5 6.5h8.3" stroke="#FFF8C0" stroke-width=".8"/></svg>
<div class="t" style="left:107px;top:372px;font-size:11px;">launcher/</div>
<div class="t" style="left:200px;top:371px;font-size:11px;width:51px;text-align:right">34</div>
<svg style="left:52px;top:391px" width="9" height="9" viewBox="0 0 9 9"><defs><linearGradient id="gp" x1="0" y1="0" x2="1" y2="1"><stop offset="0" stop-color="#fff"/><stop offset=".6" stop-color="#F0EEE6"/><stop offset="1" stop-color="#C8C4B0"/></linearGradient></defs><rect x=".5" y=".5" width="8" height="8" rx="1" fill="url(#gp)" stroke="#7A98AF"/><path d="M2 4.5h5" stroke="#000"/><path d="M4.5 2v5" stroke="#000"/></svg>
<svg style="left:69px;top:389px" width="12" height="14" viewBox="0 0 12 14"><defs><linearGradient id="gc" x1="0" y1="0" x2="1" y2="0"><stop offset="0" stop-color="#10A800"/><stop offset=".45" stop-color="#50EC10"/><stop offset="1" stop-color="#089000"/></linearGradient></defs><path d="M0 8.4L2.1 6.3l1.9 2.2L9.2 .6 11 2.3 4 13.9H2.6z" fill="url(#gc)" stroke="#0A9A00" stroke-width=".5"/><rect x="9" y="1.5" width="1" height="1" fill="#B0F080"/></svg>
<svg style="left:88px;top:390px" width="15" height="14" viewBox="0 0 15 14"><path d="M.7 13.3V1.7l1-1h3.5l1 1.3h5.3v3" fill="#FFF4A8" stroke="#D8A810" stroke-width="1.1"/><path d="M.7 13.3L3.7 5h10.5l-2.7 8.3z" fill="#FCE470" stroke="#D8A810" stroke-width="1.1"/><path d="M4.5 6.5h8.3" stroke="#FFF8C0" stroke-width=".8"/></svg>
<div class="t" style="left:107px;top:390px;font-size:11px;">multibatcher/</div>
<div class="t" style="left:200px;top:389px;font-size:11px;width:51px;text-align:right">36</div>
<svg style="left:52px;top:409px" width="9" height="9" viewBox="0 0 9 9"><defs><linearGradient id="gp" x1="0" y1="0" x2="1" y2="1"><stop offset="0" stop-color="#fff"/><stop offset=".6" stop-color="#F0EEE6"/><stop offset="1" stop-color="#C8C4B0"/></linearGradient></defs><rect x=".5" y=".5" width="8" height="8" rx="1" fill="url(#gp)" stroke="#7A98AF"/><path d="M2 4.5h5" stroke="#000"/><path d="M4.5 2v5" stroke="#000"/></svg>
<svg style="left:69px;top:407px" width="12" height="14" viewBox="0 0 12 14"><defs><linearGradient id="gc" x1="0" y1="0" x2="1" y2="0"><stop offset="0" stop-color="#10A800"/><stop offset=".45" stop-color="#50EC10"/><stop offset="1" stop-color="#089000"/></linearGradient></defs><path d="M0 8.4L2.1 6.3l1.9 2.2L9.2 .6 11 2.3 4 13.9H2.6z" fill="url(#gc)" stroke="#0A9A00" stroke-width=".5"/><rect x="9" y="1.5" width="1" height="1" fill="#B0F080"/></svg>
<svg style="left:88px;top:408px" width="15" height="14" viewBox="0 0 15 14"><path d="M.7 13.3V1.7l1-1h3.5l1 1.3h5.3v3" fill="#FFF4A8" stroke="#D8A810" stroke-width="1.1"/><path d="M.7 13.3L3.7 5h10.5l-2.7 8.3z" fill="#FCE470" stroke="#D8A810" stroke-width="1.1"/><path d="M4.5 6.5h8.3" stroke="#FFF8C0" stroke-width=".8"/></svg>
<div class="t" style="left:107px;top:408px;font-size:11px;">sitemap-generator/</div>
<div class="t" style="left:200px;top:407px;font-size:11px;width:51px;text-align:right">76</div>
<svg style="left:52px;top:427px" width="9" height="9" viewBox="0 0 9 9"><defs><linearGradient id="gp" x1="0" y1="0" x2="1" y2="1"><stop offset="0" stop-color="#fff"/><stop offset=".6" stop-color="#F0EEE6"/><stop offset="1" stop-color="#C8C4B0"/></linearGradient></defs><rect x=".5" y=".5" width="8" height="8" rx="1" fill="url(#gp)" stroke="#7A98AF"/><path d="M2 4.5h5" stroke="#000"/><path d="M4.5 2v5" stroke="#000"/></svg>
<svg style="left:69px;top:425px" width="12" height="14" viewBox="0 0 12 14"><defs><linearGradient id="gc" x1="0" y1="0" x2="1" y2="0"><stop offset="0" stop-color="#10A800"/><stop offset=".45" stop-color="#50EC10"/><stop offset="1" stop-color="#089000"/></linearGradient></defs><path d="M0 8.4L2.1 6.3l1.9 2.2L9.2 .6 11 2.3 4 13.9H2.6z" fill="url(#gc)" stroke="#0A9A00" stroke-width=".5"/><rect x="9" y="1.5" width="1" height="1" fill="#B0F080"/></svg>
<svg style="left:88px;top:426px" width="15" height="14" viewBox="0 0 15 14"><path d="M.7 13.3V1.7l1-1h3.5l1 1.3h5.3v3" fill="#FFF4A8" stroke="#D8A810" stroke-width="1.1"/><path d="M.7 13.3L3.7 5h10.5l-2.7 8.3z" fill="#FCE470" stroke="#D8A810" stroke-width="1.1"/><path d="M4.5 6.5h8.3" stroke="#FFF8C0" stroke-width=".8"/></svg>
<div class="t" style="left:107px;top:426px;font-size:11px;">timesage/</div>
<div class="t" style="left:200px;top:425px;font-size:11px;width:51px;text-align:right">29</div>
<svg style="left:52px;top:445px" width="9" height="9" viewBox="0 0 9 9"><defs><linearGradient id="gp" x1="0" y1="0" x2="1" y2="1"><stop offset="0" stop-color="#fff"/><stop offset=".6" stop-color="#F0EEE6"/><stop offset="1" stop-color="#C8C4B0"/></linearGradient></defs><rect x=".5" y=".5" width="8" height="8" rx="1" fill="url(#gp)" stroke="#7A98AF"/><path d="M2 4.5h5" stroke="#000"/><path d="M4.5 2v5" stroke="#000"/></svg>
<svg style="left:69px;top:443px" width="12" height="14" viewBox="0 0 12 14"><defs><linearGradient id="gc" x1="0" y1="0" x2="1" y2="0"><stop offset="0" stop-color="#10A800"/><stop offset=".45" stop-color="#50EC10"/><stop offset="1" stop-color="#089000"/></linearGradient></defs><path d="M0 8.4L2.1 6.3l1.9 2.2L9.2 .6 11 2.3 4 13.9H2.6z" fill="url(#gc)" stroke="#0A9A00" stroke-width=".5"/><rect x="9" y="1.5" width="1" height="1" fill="#B0F080"/></svg>
<svg style="left:88px;top:444px" width="15" height="14" viewBox="0 0 15 14"><path d="M.7 13.3V1.7l1-1h3.5l1 1.3h5.3v3" fill="#FFF4A8" stroke="#D8A810" stroke-width="1.1"/><path d="M.7 13.3L3.7 5h10.5l-2.7 8.3z" fill="#FCE470" stroke="#D8A810" stroke-width="1.1"/><path d="M4.5 6.5h8.3" stroke="#FFF8C0" stroke-width=".8"/></svg>
<div class="t" style="left:107px;top:444px;font-size:11px;">website-analyzer/</div>
<div class="t" style="left:200px;top:443px;font-size:11px;width:51px;text-align:right">75</div>
<svg style="left:52px;top:463px" width="9" height="9" viewBox="0 0 9 9"><defs><linearGradient id="gp" x1="0" y1="0" x2="1" y2="1"><stop offset="0" stop-color="#fff"/><stop offset=".6" stop-color="#F0EEE6"/><stop offset="1" stop-color="#C8C4B0"/></linearGradient></defs><rect x=".5" y=".5" width="8" height="8" rx="1" fill="url(#gp)" stroke="#7A98AF"/><path d="M2 4.5h5" stroke="#000"/><path d="M4.5 2v5" stroke="#000"/></svg>
<svg style="left:69px;top:461px" width="12" height="14" viewBox="0 0 12 14"><defs><linearGradient id="gc" x1="0" y1="0" x2="1" y2="0"><stop offset="0" stop-color="#10A800"/><stop offset=".45" stop-color="#50EC10"/><stop offset="1" stop-color="#089000"/></linearGradient></defs><path d="M0 8.4L2.1 6.3l1.9 2.2L9.2 .6 11 2.3 4 13.9H2.6z" fill="url(#gc)" stroke="#0A9A00" stroke-width=".5"/><rect x="9" y="1.5" width="1" height="1" fill="#B0F080"/></svg>
<svg style="left:88px;top:462px" width="15" height="14" viewBox="0 0 15 14"><path d="M.7 13.3V1.7l1-1h3.5l1 1.3h5.3v3" fill="#FFF4A8" stroke="#D8A810" stroke-width="1.1"/><path d="M.7 13.3L3.7 5h10.5l-2.7 8.3z" fill="#FCE470" stroke="#D8A810" stroke-width="1.1"/><path d="M4.5 6.5h8.3" stroke="#FFF8C0" stroke-width=".8"/></svg>
<div class="t" style="left:107px;top:462px;font-size:11px;">website-download/</div>
<div class="t" style="left:200px;top:461px;font-size:11px;width:51px;text-align:right">19</div>
<svg style="left:35px;top:481px" width="9" height="9" viewBox="0 0 9 9"><defs><linearGradient id="gp" x1="0" y1="0" x2="1" y2="1"><stop offset="0" stop-color="#fff"/><stop offset=".6" stop-color="#F0EEE6"/><stop offset="1" stop-color="#C8C4B0"/></linearGradient></defs><rect x=".5" y=".5" width="8" height="8" rx="1" fill="url(#gp)" stroke="#7A98AF"/><path d="M2 4.5h5" stroke="#000"/><path d="M4.5 2v5" stroke="#000"/></svg>
<svg style="left:52px;top:479px" width="12" height="14" viewBox="0 0 12 14"><defs><linearGradient id="gc" x1="0" y1="0" x2="1" y2="0"><stop offset="0" stop-color="#10A800"/><stop offset=".45" stop-color="#50EC10"/><stop offset="1" stop-color="#089000"/></linearGradient></defs><path d="M0 8.4L2.1 6.3l1.9 2.2L9.2 .6 11 2.3 4 13.9H2.6z" fill="url(#gc)" stroke="#0A9A00" stroke-width=".5"/><rect x="9" y="1.5" width="1" height="1" fill="#B0F080"/></svg>
<svg style="left:71px;top:480px" width="15" height="14" viewBox="0 0 15 14"><path d="M.7 13.3V1.7l1-1h3.5l1 1.3h5.3v3" fill="#FFF4A8" stroke="#D8A810" stroke-width="1.1"/><path d="M.7 13.3L3.7 5h10.5l-2.7 8.3z" fill="#FCE470" stroke="#D8A810" stroke-width="1.1"/><path d="M4.5 6.5h8.3" stroke="#FFF8C0" stroke-width=".8"/></svg>
<div class="t" style="left:90px;top:480px;font-size:11px;">services/</div>
<div class="t" style="left:200px;top:479px;font-size:11px;width:51px;text-align:right">4</div>
<svg style="left:35px;top:499px" width="9" height="9" viewBox="0 0 9 9"><defs><linearGradient id="gp" x1="0" y1="0" x2="1" y2="1"><stop offset="0" stop-color="#fff"/><stop offset=".6" stop-color="#F0EEE6"/><stop offset="1" stop-color="#C8C4B0"/></linearGradient></defs><rect x=".5" y=".5" width="8" height="8" rx="1" fill="url(#gp)" stroke="#7A98AF"/><path d="M2 4.5h5" stroke="#000"/><path d="M4.5 2v5" stroke="#000"/></svg>
<svg style="left:52px;top:497px" width="12" height="14" viewBox="0 0 12 14"><defs><linearGradient id="gc" x1="0" y1="0" x2="1" y2="0"><stop offset="0" stop-color="#10A800"/><stop offset=".45" stop-color="#50EC10"/><stop offset="1" stop-color="#089000"/></linearGradient></defs><path d="M0 8.4L2.1 6.3l1.9 2.2L9.2 .6 11 2.3 4 13.9H2.6z" fill="url(#gc)" stroke="#0A9A00" stroke-width=".5"/><rect x="9" y="1.5" width="1" height="1" fill="#B0F080"/></svg>
<svg style="left:71px;top:498px" width="15" height="14" viewBox="0 0 15 14"><path d="M.7 13.3V1.7l1-1h3.5l1 1.3h5.3v3" fill="#FFF4A8" stroke="#D8A810" stroke-width="1.1"/><path d="M.7 13.3L3.7 5h10.5l-2.7 8.3z" fill="#FCE470" stroke="#D8A810" stroke-width="1.1"/><path d="M4.5 6.5h8.3" stroke="#FFF8C0" stroke-width=".8"/></svg>
<div class="t" style="left:90px;top:498px;font-size:11px;">shop/</div>
<div class="t" style="left:200px;top:497px;font-size:11px;width:51px;text-align:right">6</div>
<div class="track" style="left:14px;top:574px;width:255px;height:17px;background:linear-gradient(#FEFEFB,#F3F1EA)"></div>
<div class="sbtn" style="left:15px;top:575px;width:15px;height:15px"></div>
<svg style="left:15px;top:575px" width="15" height="15" viewBox="0 0 15 15"><path d="M9.5 3.5L5.5 7.5l4 4" stroke="#4D6185" stroke-width="2" fill="none"/></svg>
<div class="sbtn" style="left:253px;top:575px;width:15px;height:15px"></div>
<svg style="left:253px;top:575px" width="15" height="15" viewBox="0 0 15 15"><path d="M5.5 3.5l4 4-4 4" stroke="#4D6185" stroke-width="2" fill="none"/></svg>
<div class="thumb" style="left:32px;top:575px;width:89px;height:15px"></div>
<svg style="left:72px;top:579px" width="8" height="8" viewBox="0 0 8 8"><path d="M0.5 0v7" stroke="#EEF4FE"/><path d="M1.5 1v7" stroke="#8CB0F8"/><path d="M2.5 0v7" stroke="#EEF4FE"/><path d="M3.5 1v7" stroke="#8CB0F8"/><path d="M4.5 0v7" stroke="#EEF4FE"/><path d="M5.5 1v7" stroke="#8CB0F8"/><path d="M6.5 0v7" stroke="#EEF4FE"/><path d="M7.5 1v7" stroke="#8CB0F8"/></svg>
<div class="hdr" style="left:10px;top:597px;width:264px;letter-spacing:-0.178px;">Change active selection</div>
<div class="a" style="left:9px;top:617px;width:196px;height:19px;border:1px solid #8A8676;border-right-color:#A8A494;border-bottom-color:#A8A494;background:#fff;overflow:hidden"><div class="t" style="left:0.5px;top:2px;font-size:11px;letter-spacing:.21px">http://www.micro-sys.dk/products/sitemap-generator/</div></div>
<div class="btn" style="left:207px;top:617px;width:21px;height:19px"></div>
<div class="btn" style="left:230px;top:617px;width:21px;height:19px"></div>
<div class="btn" style="left:253px;top:617px;width:21px;height:19px"></div>
<svg style="left:210px;top:619px" width="15" height="15" viewBox="0 0 15 15"><path d="M5.5 1.5h4v4h4v4h-4v4h-4v-4h-4v-4h4z" fill="#62CC5A" stroke="#3A9A34" stroke-width=".9"/></svg>
<svg style="left:233px;top:619px" width="16" height="15" viewBox="0 0 16 15"><rect x="1.5" y="2.5" width="12" height="11" fill="#fff" stroke="#1850B8" stroke-width="1"/><path d="M1.5 3h12" stroke="#1850B8" stroke-width="2"/><path d="M3 6.5h6M3 8.5h5M3 10.5h4" stroke="#98A0A8"/><path d="M7 13l1-3 5.5-8 1.8 1.2L9.8 11.2z" fill="#88B8F0" stroke="#102040" stroke-width=".8"/><path d="M13.5 2l1.8 1.2.6-1-1.6-1.2z" fill="#E04020"/></svg>
<svg style="left:255px;top:618px" width="18" height="18" viewBox="0 0 18 18"><path d="M2.5 5.5l7-3.5 7 5-7.5 4z" fill="#8888E0" stroke="#4040A0" stroke-width=".8"/><path d="M2.5 5.5v4.5l6.5 5v-4z" fill="#6060C0" stroke="#4040A0" stroke-width=".8"/><path d="M9 11v4l7.5-4V7z" fill="#D8D8F0" stroke="#303060" stroke-width=".9"/><circle cx="4" cy="3" r="2" fill="#30B030"/><path d="M9.5 5.5l2-1 1 1.5-2 1z" fill="#F0C020"/></svg>
<div class="hatch" style="left:9px;top:637px;width:266px;height:21px;box-shadow:1px 1px 0 #D0CEBF"></div>
<div class="a" style="left:9px;top:636px;width:265px;height:1px;background:#fff"></div>
<div class="a" style="left:4px;top:664px;width:862px;height:18px;background:linear-gradient(#ECE9D8 0,#E6E2CF 60%,#DAD6C0 94%,#EEE8CC 94%)"></div>
<div class="a" style="left:4px;top:663px;width:862px;height:1px;background:#C8C5B5"></div>
<div class="t" style="left:6px;top:668px;font-size:11px;letter-spacing:-0.076px;">Write or select an address</div>
<div class="a" style="left:814px;top:666px;width:1px;height:14px;background:#C8C5B5;box-shadow:1px 0 0 #fff"></div>
<div class="a" style="left:861px;top:671px;width:2px;height:2px;background:#C0BDAD;box-shadow:1px 1px 0 #fff"></div>
<div class="a" style="left:858px;top:674px;width:2px;height:2px;background:#C0BDAD;box-shadow:1px 1px 0 #fff"></div>
<div class="a" style="left:861px;top:674px;width:2px;height:2px;background:#C0BDAD;box-shadow:1px 1px 0 #fff"></div>
<div class="a" style="left:855px;top:677px;width:2px;height:2px;background:#C0BDAD;box-shadow:1px 1px 0 #fff"></div>
<div class="a" style="left:858px;top:677px;width:2px;height:2px;background:#C0BDAD;box-shadow:1px 1px 0 #fff"></div>
<div class="a" style="left:861px;top:677px;width:2px;height:2px;background:#C0BDAD;box-shadow:1px 1px 0 #fff"></div>
<div class="a" style="left:283px;top:125px;width:576px;height:161px;border:1px solid #919B9C;background:#FCFCFE;box-shadow:1px 1px 0 #D0CEBF,2px 2px 0 #E0DED2"></div>
<div class="tab" style="left:367px;top:108px;width:49px;height:18px"></div>
<div class="t" style="left:371.5px;top:112px;font-size:11px;letter-spacing:-0.241px;">View file</div>
<div class="tab" style="left:415px;top:108px;width:70px;height:18px"></div>
<div class="t" style="left:422.8px;top:112px;font-size:11px;letter-spacing:-0.356px;">View source</div>
<div class="tab" style="left:484px;top:108px;width:106px;height:18px"></div>
<div class="t" style="left:491.4px;top:112px;font-size:11px;letter-spacing:-0.348px;">W3C validate HTML</div>
<div class="tab" style="left:589px;top:108px;width:98px;height:18px"></div>
<div class="t" style="left:596.7px;top:112px;font-size:11px;letter-spacing:-0.312px;">W3C validate CSS</div>
<div class="tabsel" style="left:283px;top:106px;width:85px;height:20px"></div>
<div class="t" style="left:290.6px;top:110px;font-size:11px;letter-spacing:-0.131px;">Collected data</div>
<div class="a" style="left:288px;top:133px;width:567px;height:127px;border:1px solid #ACA899;box-shadow:inset 1px 1px 0 #fff"></div>
<div class="lv" style="left:292px;top:137px;width:561px;height:121px"></div>
<div class="hd" style="left:293px;top:138px;width:540px;height:20px"></div>
<div class="a" style="left:761px;top:141px;width:1px;height:14px;background:#C7C5B2;box-shadow:1px 0 0 #fff"></div>
<div class="a" style="left:831px;top:141px;width:1px;height:14px;background:#C7C5B2;box-shadow:1px 0 0 #fff"></div>
<div class="t" style="left:302.6px;top:143px;font-size:11px;letter-spacing:-0.231px;">Links to 29 pages</div>
<div class="t" style="left:700px;width:126px;top:143px;text-align:right">Count 40</div>
<div class="t" style="left:299.3px;top:160px;font-size:11px;letter-spacing:-0.009px;">http://store.esellerate.net/s.asp?s=STR9885276359&amp;Cmd=CATALOG&amp;CategoryID=8943</div>
<div class="t" style="left:780px;top:160px;font-size:11px;width:47px;text-align:right">4</div>
<div class="t" style="left:299.3px;top:174px;font-size:11px;letter-spacing:0.202px;">http://www.micro-sys.dk/products/</div>
<div class="t" style="left:780px;top:174px;font-size:11px;width:47px;text-align:right">3</div>
<div class="t" style="left:299.3px;top:188px;font-size:11px;letter-spacing:0.119px;">http://www.micro-sys.dk/products/sitemap-generator/help/</div>
<div class="t" style="left:780px;top:188px;font-size:11px;width:47px;text-align:right">3</div>
<div class="t" style="left:299.3px;top:202px;font-size:11px;letter-spacing:0.234px;">http://www.micro-sys.dk/</div>
<div class="t" style="left:780px;top:202px;font-size:11px;width:47px;text-align:right">2</div>
<div class="t" style="left:299.3px;top:216px;font-size:11px;letter-spacing:0.091px;">http://www.micro-sys.dk/home/sitemap.php</div>
<div class="t" style="left:780px;top:216px;font-size:11px;width:47px;text-align:right">2</div>
<div class="t" style="left:299.3px;top:230px;font-size:11px;letter-spacing:0.201px;">http://www.micro-sys.dk/sitemap.txt</div>
<div class="t" style="left:780px;top:230px;font-size:11px;width:47px;text-align:right">1</div>
<div class="t" style="left:299.3px;top:244px;font-size:11px;letter-spacing:0.115px;">http://www.micro-sys.dk/sitemap.xml</div>
<div class="t" style="left:780px;top:244px;font-size:11px;width:47px;text-align:right">1</div>
<div class="track" style="left:833px;top:139px;width:17px;height:117px;background:linear-gradient(90deg,#FEFEFB,#F3F1EA)"></div>
<div class="sbtn" style="left:834px;top:140px;width:15px;height:15px"></div>
<svg style="left:834px;top:140px" width="15" height="15" viewBox="0 0 15 15"><path d="M3.5 9.5L7.5 5.5l4 4" stroke="#4D6185" stroke-width="2" fill="none"/></svg>
<div class="sbtn" style="left:834px;top:240px;width:15px;height:15px"></div>
<svg style="left:834px;top:240px" width="15" height="15" viewBox="0 0 15 15"><path d="M3.5 5.5l4 4 4-4" stroke="#4D6185" stroke-width="2" fill="none"/></svg>
<div class="thumb" style="left:834px;top:156px;width:15px;height:17px"></div>
<svg style="left:838px;top:160px" width="8" height="8" viewBox="0 0 8 8"><path d="M0 0.5h7" stroke="#EEF4FE"/><path d="M1 1.5h7" stroke="#8CB0F8"/><path d="M0 2.5h7" stroke="#EEF4FE"/><path d="M1 3.5h7" stroke="#8CB0F8"/><path d="M0 4.5h7" stroke="#EEF4FE"/><path d="M1 5.5h7" stroke="#8CB0F8"/><path d="M0 6.5h7" stroke="#EEF4FE"/><path d="M1 7.5h7" stroke="#8CB0F8"/></svg>
<div class="hatch" style="left:289px;top:262px;width:566px;height:21px"></div>
<div class="a" style="left:288px;top:261px;width:567px;height:1px;background:#fff"></div>
<svg style="left:0;top:262px" width="870" height="18" viewBox="0 0 870 18"><path d="M297.0 0L301.5 15.6H362.5L367.0 0" fill="#fff" stroke="#000" stroke-width="1.2"/><path d="M364.5 0L369.0 15.6H459.5L464.0 0" fill="#fff" stroke="#000" stroke-width="1.2"/><path d="M461.5 0L466.0 15.6H548.2L552.7 0" fill="#fff" stroke="#000" stroke-width="1.2"/><path d="M550.2 0L554.7 15.6H645.9L650.4 0" fill="#fff" stroke="#000" stroke-width="1.2"/><path d="M712.1 0L716.6 15.6H808.7L813.2 0" fill="#fff" stroke="#000" stroke-width="1.2"/><path d="M648.0 0L652.5 15.6H710.1L714.6 0" fill="#ECE9D8" stroke="#000" stroke-width="1.2"/></svg>
<div class="t" style="left:302.8px;top:264px;font-size:11px;letter-spacing:-0.152px;">Linked to by</div>
<div class="t" style="left:369.7px;top:264px;font-size:11px;letter-spacing:-0.248px;">Used as source by</div>
<div class="t" style="left:466px;top:264px;font-size:11px;letter-spacing:0.024px;">Redirected to by</div>
<div class="t" style="left:555px;top:264px;font-size:11px;letter-spacing:-0.117px;">Directory summary</div>
<div class="t" style="left:653.9px;top:264px;font-size:11px;letter-spacing:-0.170px;">Links found</div>
<div class="t" style="left:717.1px;top:264px;font-size:11px;letter-spacing:-0.240px;">Response headers</div>
<svg style="left:0;top:638px" width="870" height="18" viewBox="0 0 870 18"><path d="M67.0 0L71.5 15.6H126.5L131.0 0" fill="#fff" stroke="#000" stroke-width="1.2"/><path d="M17.4 0L21.9 15.6H64.5L69.0 0" fill="#ECE9D8" stroke="#000" stroke-width="1.2"/></svg>
<div class="t" style="left:23.9px;top:639px;font-size:11px;letter-spacing:-0.323px;">Address</div>
<div class="t" style="left:71.7px;top:639px;font-size:11px;letter-spacing:-0.151px;">User agent</div>
<div class="a" style="left:831px;top:265px;width:23px;height:13px;background:#000"></div>
<div class="a" style="left:832px;top:266px;width:10px;height:11px;background:#C0C0C0;box-shadow:inset 1px 1px 0 #fff,inset -1px -1px 0 #808080"></div>
<div class="a" style="left:843px;top:266px;width:10px;height:11px;background:#C0C0C0;box-shadow:inset 1px 1px 0 #fff,inset -1px -1px 0 #808080"></div>
<svg style="left:831px;top:265px" width="23" height="13" viewBox="0 0 23 13"><path d="M3 6.5l3-3v2h3v2H6v2z" fill="#000"/><path d="M20 6.5l-3-3v2h-3v2h3v2z" fill="#808080"/><path d="M14.5 8.5h2.5v1.5l1-1" stroke="#fff" stroke-width=".8" fill="none"/></svg>
<div class="a" style="left:855px;top:262px;width:1px;height:21px;background:#D0CEBF"></div>
<div class="a" style="left:289px;top:283px;width:567px;height:1px;background:#D0CEBF"></div>
<div class="hdr" style="left:284px;top:295px;width:576px;letter-spacing:-0.258px;">Online tools</div>
<div class="a" style="left:284px;top:335px;width:575px;height:1px;background:#919B9C;box-shadow:0 1px 0 #fff"></div>
<div class="tab" style="left:285px;top:317px;width:97px;height:18px"></div>
<div class="t" style="left:290.5px;top:319.5px;font-size:11px;letter-spacing:-0.312px;">Samspade - whois</div>
<div class="tab" style="left:383px;top:317px;width:124px;height:18px"></div>
<div class="t" style="left:388.7px;top:319.5px;font-size:11px;letter-spacing:-0.407px;">CSE HTML Validator Lite</div>
<div class="tab" style="left:508px;top:317px;width:137px;height:18px"></div>
<div class="t" style="left:513.4px;top:319.5px;font-size:11px;letter-spacing:-0.029px;">Overture Suggest (Yahoo)</div>
<div class="a" style="left:290px;top:346px;width:475px;height:21px;border:1px solid #7F9DB9;background:#fff"></div>
<div class="a" style="left:293px;top:349px;width:452px;height:13px;background:#316AC5;overflow:hidden"><div class="t" style="left:0;top:0;color:#fff;font-size:11px">/search?q=link:http%3A%2F%2Fwww.micro-sys.dk%2Fproducts%2Fsitemap-generator%2F</div></div>
<div class="sbtn" style="left:748px;top:348px;width:15px;height:17px"></div>
<svg style="left:748px;top:349px" width="15" height="15" viewBox="0 0 15 15"><path d="M3.5 5.5l4 4 4-4" stroke="#4D6185" stroke-width="2" fill="none"/></svg>
<div class="btn" style="left:771px;top:346px;width:22px;height:22px"></div>
<div class="btn" style="left:801px;top:346px;width:22px;height:22px"></div>
<div class="btn" style="left:831px;top:346px;width:22px;height:22px"></div>
<svg style="left:775px;top:350px" width="14" height="14" viewBox="0 0 14 14"><path d="M4 1l8 6-8 6z" fill="#20A020" stroke="#107010" stroke-width=".8"/></svg>
<svg style="left:804px;top:349px" width="16" height="16" viewBox="0 0 16 16"><path d="M2.5 1.5h8l3 3v10h-11z" fill="#E8F0FC" stroke="#5070B0"/><rect x="4" y="7" width="6" height="6" fill="#fff" stroke="#2040A0"/><path d="M5 9l2 2 5-6" stroke="#E03020" stroke-width="1.5" fill="none"/></svg>
<svg style="left:833px;top:348px" width="18" height="18" viewBox="0 0 18 18"><path d="M1 6h5l1 1h5v9H1z" fill="#E8C040" stroke="#C89818"/><path d="M2.5 10h13l-3 6.5H.5z" fill="#FCE488" stroke="#D0A020"/><path d="M7 4c2-3 6-3 8 1l1.5-1-1 5-4-1.5 1.5-1c-1-2-4-2-6-2.5z" fill="#30B030" stroke="#108010" stroke-width=".6"/></svg>
<div class="a" style="left:282px;top:376px;width:2px;height:283px;background:#fff"></div>
<div class="a" style="left:284px;top:378px;width:576px;height:280px;border-top:1px solid #ACA899;border-left:1px solid #ACA899;border-right:1px solid #fff;border-bottom:1px solid #fff"></div>
<div class="a" style="left:285px;top:379px;width:574px;height:278px;border-top:1px solid #716F64;border-left:1px solid #716F64;border-right:1px solid #F1EFE2;border-bottom:1px solid #F1EFE2;background:#fff;overflow:hidden"><div style="position:absolute;left:0;top:0;width:572px;height:277px"><div class="t" style="left:503px;top:4px;font-size:13px;line-height:17px;color:#2000C8;text-decoration:underline">Log ind</div><div class="a" style="left:470px;top:48px;width:17px;height:24px;background:#ECE9D8;border-right:2px solid #716F64;border-bottom:2px solid #716F64;box-shadow:inset 1px 1px 0 #fff"></div><div class="a" style="left:478px;top:58px;width:3px;height:6px;background:#902020"></div><div class="t" style="left:493px;top:48px;font-size:9px;letter-spacing:.72px;color:#2000C8;text-decoration:underline">Avanceret søgning</div><div class="t" style="left:493px;top:62px;font-size:9px;letter-spacing:.72px;color:#2000C8;text-decoration:underline">Indstillinger</div><div class="a" style="left:10px;top:103px;width:548px;height:1px;background:#3366CC"></div><div class="a" style="left:10px;top:104px;width:548px;height:21px;background:#E5ECF9"></div><div class="t" style="left:16px;top:104px;font-size:18px;line-height:22px;font-weight:bold">Nettet</div><div class="t" style="left:75px;top:108px;font-size:12.5px;line-height:15px;word-spacing:7.5px">Resultaterne <b>1</b> - <b>10</b> af ca. <b>37</b> for <b>link:http://www.micro-sys.dk/products/sitemap-generator/</b></div><div class="t" style="left:10px;top:142px;font-size:15.6px;line-height:18px;color:#0000CC;text-decoration:underline">Microsys - Store</div><div class="t" style="left:10px;top:160px;font-size:13px;line-height:15px">Microsys develops software products and web services for both businesses and home users.</div><div class="t" style="left:10px;top:176px;font-size:13px;line-height:15px">A primary field is custom designed software for PC and PLC machines <b>...</b></div><div class="t" style="left:10px;top:192px;font-size:13px;line-height:15px;color:#008000">www.micro-sys.dk/shop/sitemap-generator/ - 34k - <span style="color:#7777CC;text-decoration:underline">Cached</span><span style="color:#000"> - </span><span style="color:#7777CC;text-decoration:underline">Lignende sider</span></div><div class="t" style="left:50px;top:223px;font-size:15.6px;line-height:18px;color:#0000CC;text-decoration:underline">A1 Sitemap Generator / Help / Website data and link checker</div><div class="t" style="left:50px;top:241px;font-size:13px;line-height:15px">A1 Sitemap Generator/ Help / Website data and link checker.</div></div></div>
<div class="track" style="left:841px;top:380px;width:17px;height:258px;background:linear-gradient(90deg,#FEFEFB,#F3F1EA)"></div>
<div class="sbtn" style="left:842px;top:381px;width:15px;height:15px"></div>
<svg style="left:842px;top:381px" width="15" height="15" viewBox="0 0 15 15"><path d="M3.5 9.5L7.5 5.5l4 4" stroke="#4D6185" stroke-width="2" fill="none"/></svg>
<div class="sbtn" style="left:842px;top:622px;width:15px;height:15px"></div>
<svg style="left:842px;top:622px" width="15" height="15" viewBox="0 0 15 15"><path d="M3.5 5.5l4 4 4-4" stroke="#4D6185" stroke-width="2" fill="none"/></svg>
<div class="thumb" style="left:842px;top:399px;width:15px;height:46px"></div>
<svg style="left:846px;top:418px" width="8" height="8" viewBox="0 0 8 8"><path d="M0 0.5h7" stroke="#EEF4FE"/><path d="M1 1.5h7" stroke="#8CB0F8"/><path d="M0 2.5h7" stroke="#EEF4FE"/><path d="M1 3.5h7" stroke="#8CB0F8"/><path d="M0 4.5h7" stroke="#EEF4FE"/><path d="M1 5.5h7" stroke="#8CB0F8"/><path d="M0 6.5h7" stroke="#EEF4FE"/><path d="M1 7.5h7" stroke="#8CB0F8"/></svg>
<div class="track" style="left:286px;top:639px;width:555px;height:17px;background:linear-gradient(#FEFEFB,#F3F1EA)"></div>
<div class="sbtn" style="left:287px;top:640px;width:15px;height:15px"></div>
<svg style="left:287px;top:640px" width="15" height="15" viewBox="0 0 15 15"><path d="M9.5 3.5L5.5 7.5l4 4" stroke="#4D6185" stroke-width="2" fill="none"/></svg>
<div class="sbtn" style="left:825px;top:640px;width:15px;height:15px"></div>
<svg style="left:825px;top:640px" width="15" height="15" viewBox="0 0 15 15"><path d="M5.5 3.5l4 4-4 4" stroke="#4D6185" stroke-width="2" fill="none"/></svg>
<div class="thumb" style="left:304px;top:640px;width:370px;height:15px"></div>
<svg style="left:485px;top:644px" width="8" height="8" viewBox="0 0 8 8"><path d="M0.5 0v7" stroke="#EEF4FE"/><path d="M1.5 1v7" stroke="#8CB0F8"/><path d="M2.5 0v7" stroke="#EEF4FE"/><path d="M3.5 1v7" stroke="#8CB0F8"/><path d="M4.5 0v7" stroke="#EEF4FE"/><path d="M5.5 1v7" stroke="#8CB0F8"/><path d="M6.5 0v7" stroke="#EEF4FE"/><path d="M7.5 1v7" stroke="#8CB0F8"/></svg>
<div class="a" style="left:841px;top:638px;width:17px;height:18px;background:#ECE9D8"></div>
<div class="a" style="left:861px;top:336px;width:1px;height:323px;background:#ACA899"></div>
<div class="a" style="left:862px;top:336px;width:1px;height:324px;background:#fff"></div>
<div class="a" style="left:283px;top:658px;width:579px;height:1px;background:#ACA899"></div>
<div class="a" style="left:283px;top:659px;width:580px;height:1px;background:#fff"></div>
<div class="a" style="left:290px;top:368px;width:475px;height:130px;border:1px solid #000;background:#fff"></div>
<div class="a" style="left:764px;top:368px;width:1px;height:130px;background:#000;z-index:2"></div>
<div class="a" style="left:291px;top:369px;width:456px;height:16px;background:#316AC5"></div>
<div class="a" style="left:439px;top:369px;width:1px;height:128px;background:#000"></div>
<div class="a" style="left:484px;top:369px;width:1px;height:128px;background:#000"></div>
<div class="t" style="left:294px;top:371px;font-size:11px;letter-spacing:-0.261px;color:#fff">Google (backlinks)</div>
<div class="t" style="left:444px;top:371px;font-size:11px;letter-spacing:0.079px;color:#fff">page</div>
<div class="t" style="left:489.2px;top:371px;font-size:11px;letter-spacing:-0.172px;color:#fff">search</div>
<div class="t" style="left:294px;top:387px;font-size:11px;letter-spacing:-0.222px;color:#000">Google (cached)</div>
<div class="t" style="left:444px;top:387px;font-size:11px;letter-spacing:0.079px;color:#000">page</div>
<div class="t" style="left:489.2px;top:387px;font-size:11px;letter-spacing:-0.172px;color:#000">search</div>
<div class="t" style="left:294px;top:403px;font-size:11px;letter-spacing:-0.094px;color:#000">Google (related)</div>
<div class="t" style="left:444px;top:403px;font-size:11px;letter-spacing:0.079px;color:#000">page</div>
<div class="t" style="left:489.2px;top:403px;font-size:11px;letter-spacing:-0.172px;color:#000">search</div>
<div class="t" style="left:294px;top:419px;font-size:11px;letter-spacing:-0.106px;color:#000">Google (site)</div>
<div class="t" style="left:444px;top:419px;font-size:11px;letter-spacing:0.079px;color:#000">page</div>
<div class="t" style="left:489.2px;top:419px;font-size:11px;letter-spacing:-0.172px;color:#000">search</div>
<div class="t" style="left:294px;top:435px;font-size:11px;letter-spacing:-0.376px;color:#000">CSE HTML Validator Lite</div>
<div class="t" style="left:444px;top:435px;font-size:11px;letter-spacing:0.079px;color:#000">page</div>
<div class="t" style="left:489.2px;top:435px;font-size:11px;color:#000">structure</div>
<div class="t" style="left:294px;top:451px;font-size:11px;letter-spacing:-0.100px;color:#000">Online Tidy - Aborla</div>
<div class="t" style="left:444px;top:451px;font-size:11px;letter-spacing:0.079px;color:#000">page</div>
<div class="t" style="left:489.2px;top:451px;font-size:11px;color:#000">structure</div>
<div class="t" style="left:294px;top:467px;font-size:11px;letter-spacing:-0.393px;color:#000">Amazon</div>
<div class="t" style="left:444px;top:467px;font-size:11px;letter-spacing:-0.107px;color:#000">phrase</div>
<div class="t" style="left:489.2px;top:467px;font-size:11px;letter-spacing:0.201px;color:#000">content</div>
<div class="t" style="left:294px;top:483px;font-size:11px;letter-spacing:-0.478px;color:#000">Amazon UK</div>
<div class="t" style="left:444px;top:483px;font-size:11px;letter-spacing:-0.107px;color:#000">phrase</div>
<div class="t" style="left:489.2px;top:483px;font-size:11px;letter-spacing:0.201px;color:#000">content</div>
<div class="track" style="left:747px;top:369px;width:17px;height:128px;background:linear-gradient(90deg,#FEFEFB,#F3F1EA)"></div>
<div class="sbtn" style="left:748px;top:370px;width:15px;height:15px"></div>
<svg style="left:748px;top:370px" width="15" height="15" viewBox="0 0 15 15"><path d="M3.5 9.5L7.5 5.5l4 4" stroke="#4D6185" stroke-width="2" fill="none"/></svg>
<div class="sbtn" style="left:748px;top:481px;width:15px;height:15px"></div>
<svg style="left:748px;top:481px" width="15" height="15" viewBox="0 0 15 15"><path d="M3.5 5.5l4 4 4-4" stroke="#4D6185" stroke-width="2" fill="none"/></svg>
<div class="thumb" style="left:748px;top:393px;width:15px;height:27px"></div>
<svg style="left:752px;top:402px" width="8" height="8" viewBox="0 0 8 8"><path d="M0 0.5h7" stroke="#EEF4FE"/><path d="M1 1.5h7" stroke="#8CB0F8"/><path d="M0 2.5h7" stroke="#EEF4FE"/><path d="M1 3.5h7" stroke="#8CB0F8"/><path d="M0 4.5h7" stroke="#EEF4FE"/><path d="M1 5.5h7" stroke="#8CB0F8"/><path d="M0 6.5h7" stroke="#EEF4FE"/><path d="M1 7.5h7" stroke="#8CB0F8"/></svg>
</body></html>
